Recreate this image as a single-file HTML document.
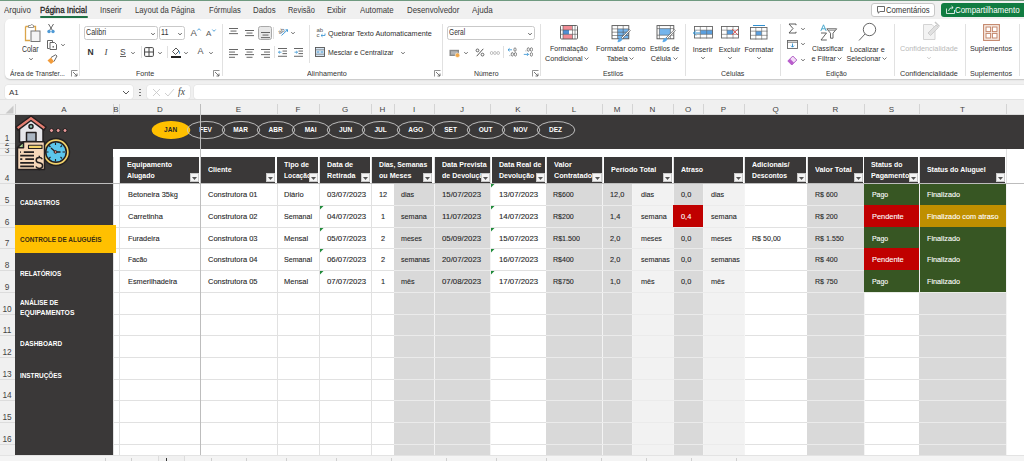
<!DOCTYPE html><html><head><meta charset="utf-8"><style>
*{margin:0;padding:0;box-sizing:border-box}
html,body{width:1024px;height:461px;overflow:hidden;background:#f0f0f0}
body{position:relative;font-family:"Liberation Sans",sans-serif;color:#262626}
.t{position:absolute;white-space:nowrap;line-height:1}
.rb{font-size:7.2px;color:#2e2e2e}
.tab{font-size:8px;color:#383838;letter-spacing:-0.05px}
.gl{font-size:7.2px;color:#333}
.cell{font-size:7.7px;color:#262626;letter-spacing:-0.05px}
.hd{font-size:7px;color:#fff;font-weight:bold}
.sb{font-size:6.5px;color:#fff;font-weight:bold}
.mo{font-size:6.5px;color:#fff;font-weight:bold}
.ch{font-size:8px;color:#444}
svg{position:absolute;overflow:visible}
svg.ic{position:relative;display:inline-block;vertical-align:baseline;margin-left:1.5px;top:-0.5px}
</style></head><body>
<div style="position:absolute;left:0px;top:0px;width:1024px;height:1px;background:#6f9a80"></div>
<div class="t" style="left:4.4px;top:6.3px;font-size:8.4px;color:#3a3a3a;transform:scaleX(0.944);transform-origin:0 0;">Arquivo</div>
<div class="t" style="left:40.3px;top:6.3px;font-size:8.4px;color:#1f1f1f;transform:scaleX(0.943);transform-origin:0 0;-webkit-text-stroke:0.3px #1f1f1f;">Página Inicial</div>
<div class="t" style="left:99.6px;top:6.3px;font-size:8.4px;color:#3a3a3a;transform:scaleX(0.930);transform-origin:0 0;">Inserir</div>
<div class="t" style="left:134.8px;top:6.3px;font-size:8.4px;color:#3a3a3a;transform:scaleX(0.918);transform-origin:0 0;">Layout da Página</div>
<div class="t" style="left:208.7px;top:6.3px;font-size:8.4px;color:#3a3a3a;transform:scaleX(0.908);transform-origin:0 0;">Fórmulas</div>
<div class="t" style="left:253.4px;top:6.3px;font-size:8.4px;color:#3a3a3a;transform:scaleX(0.935);transform-origin:0 0;">Dados</div>
<div class="t" style="left:287.6px;top:6.3px;font-size:8.4px;color:#3a3a3a;transform:scaleX(0.886);transform-origin:0 0;">Revisão</div>
<div class="t" style="left:327.2px;top:6.3px;font-size:8.4px;color:#3a3a3a;transform:scaleX(0.905);transform-origin:0 0;">Exibir</div>
<div class="t" style="left:359.6px;top:6.3px;font-size:8.4px;color:#3a3a3a;transform:scaleX(0.937);transform-origin:0 0;">Automate</div>
<div class="t" style="left:407.2px;top:6.3px;font-size:8.4px;color:#3a3a3a;transform:scaleX(0.937);transform-origin:0 0;">Desenvolvedor</div>
<div class="t" style="left:472.3px;top:6.3px;font-size:8.4px;color:#3a3a3a;transform:scaleX(0.963);transform-origin:0 0;">Ajuda</div>
<div style="position:absolute;left:40px;top:16px;width:48px;height:2px;background:#1e7145;border-radius:1px"></div>
<div style="position:absolute;left:871px;top:2.5px;width:64px;height:14px;background:#fff;border:1px solid #c8c8c8;border-radius:3px"></div>
<div class="t" style="left:885.7px;top:5.8px;font-size:8.6px;color:#333;transform:scaleX(0.896);transform-origin:0 0;">Comentários</div>
<svg style="left:876.5px;top:5.5px" width="8" height="8" viewBox="0 0 8 8"><path d="M0.5 0.5H7.5V5.5H3L1.2 7.2V5.5H0.5Z" fill="none" stroke="#444" stroke-width="0.8"/></svg>
<div style="position:absolute;left:941px;top:2.5px;width:90px;height:14px;background:#107c41;border-radius:3px"></div>
<div class="t" style="left:955.1px;top:5.8px;font-size:8.6px;color:#fff;transform:scaleX(0.919);transform-origin:0 0;">Compartilhamento</div>
<svg style="left:946px;top:5px" width="9" height="9" viewBox="0 0 9 9"><path d="M0.5 3.5V8.5H8.5V5" fill="none" stroke="#fff" stroke-width="0.8"/><path d="M2.5 6Q3 2.5 7 2.5M5.5 1L7.2 2.5L5.5 4" fill="none" stroke="#fff" stroke-width="0.8"/></svg>
<div style="position:absolute;left:4.5px;top:19px;width:1030px;height:60px;background:#fff;border-radius:5px;box-shadow:0 1px 1.5px rgba(0,0,0,0.18)"></div>
<div style="position:absolute;left:79px;top:24px;width:1px;height:52px;background:#e1e1e1"></div>
<div style="position:absolute;left:221.5px;top:24px;width:1px;height:52px;background:#e1e1e1"></div>
<div style="position:absolute;left:441.8px;top:24px;width:1px;height:52px;background:#e1e1e1"></div>
<div style="position:absolute;left:539.6px;top:24px;width:1px;height:52px;background:#e1e1e1"></div>
<div style="position:absolute;left:685px;top:24px;width:1px;height:52px;background:#e1e1e1"></div>
<div style="position:absolute;left:779.6px;top:24px;width:1px;height:52px;background:#e1e1e1"></div>
<div style="position:absolute;left:893.5px;top:24px;width:1px;height:52px;background:#e1e1e1"></div>
<div style="position:absolute;left:964.5px;top:24px;width:1px;height:52px;background:#e1e1e1"></div>
<div style="position:absolute;left:1019px;top:24px;width:1px;height:52px;background:#e1e1e1"></div>
<div style="position:absolute;left:309.3px;top:25px;width:0.8px;height:38px;background:#e1e1e1"></div>
<div class="t" style="left:10.2px;top:69.8px;font-size:7.6px;color:#333;transform:scaleX(0.880);transform-origin:0 0;">Área de Transfer...</div>
<div class="t" style="left:136.4px;top:69.8px;font-size:7.6px;color:#333;transform:scaleX(0.942);transform-origin:0 0;">Fonte</div>
<div class="t" style="left:307px;top:69.8px;font-size:7.6px;color:#333;transform:scaleX(0.944);transform-origin:0 0;">Alinhamento</div>
<div class="t" style="left:473.7px;top:69.8px;font-size:7.6px;color:#333;transform:scaleX(0.910);transform-origin:0 0;">Número</div>
<div class="t" style="left:602.6px;top:69.8px;font-size:7.6px;color:#333;transform:scaleX(0.907);transform-origin:0 0;">Estilos</div>
<div class="t" style="left:721px;top:69.8px;font-size:7.6px;color:#333;transform:scaleX(0.923);transform-origin:0 0;">Células</div>
<div class="t" style="left:826px;top:69.8px;font-size:7.6px;color:#333;transform:scaleX(0.891);transform-origin:0 0;">Edição</div>
<div class="t" style="left:900px;top:69.8px;font-size:7.6px;color:#333;transform:scaleX(0.957);transform-origin:0 0;">Confidencialidade</div>
<div class="t" style="left:970px;top:69.8px;font-size:7.6px;color:#333;transform:scaleX(0.947);transform-origin:0 0;">Suplementos</div>
<svg style="left:71px;top:70px" width="7" height="7" viewBox="0 0 7 7"><path d="M0.5 6.5V0.5H6.5" fill="none" stroke="#777" stroke-width="0.8"/><path d="M2 2L6 6M6 3.5V6H3.5" fill="none" stroke="#555" stroke-width="0.8"/></svg>
<svg style="left:212.6px;top:70px" width="7" height="7" viewBox="0 0 7 7"><path d="M0.5 6.5V0.5H6.5" fill="none" stroke="#777" stroke-width="0.8"/><path d="M2 2L6 6M6 3.5V6H3.5" fill="none" stroke="#555" stroke-width="0.8"/></svg>
<svg style="left:434.4px;top:70px" width="7" height="7" viewBox="0 0 7 7"><path d="M0.5 6.5V0.5H6.5" fill="none" stroke="#777" stroke-width="0.8"/><path d="M2 2L6 6M6 3.5V6H3.5" fill="none" stroke="#555" stroke-width="0.8"/></svg>
<svg style="left:532px;top:70px" width="7" height="7" viewBox="0 0 7 7"><path d="M0.5 6.5V0.5H6.5" fill="none" stroke="#777" stroke-width="0.8"/><path d="M2 2L6 6M6 3.5V6H3.5" fill="none" stroke="#555" stroke-width="0.8"/></svg>
<svg style="left:22px;top:23px" width="20" height="20" viewBox="0 0 20 20"><path d="M3.5 3.5H7M11 3.5H13.5V8M3.5 3.5V17.5H8" fill="none" stroke="#dba54a" stroke-width="1.3"/><path d="M6.5 4.5V2.5H8.5A1.3 1.3 0 0 1 11 2.5H11.5V4.5Z" fill="#fff" stroke="#888" stroke-width="0.9"/><rect x="9" y="8" width="9" height="10.5" fill="#f4f4f4" stroke="#777" stroke-width="1"/></svg>
<div class="t" style="left:22px;top:46.3px;font-size:8.2px;color:#333;transform:scaleX(0.847);transform-origin:0 0;">Colar</div>
<svg style="left:27.5px;top:56.5px" width="6" height="4" viewBox="0 0 6 4"><path d="M1.3 1.15L3 2.85L4.7 1.15" fill="none" stroke="#555" stroke-width="0.9"/></svg>
<svg style="left:46px;top:23px" width="10" height="11" viewBox="0 0 10 11"><path d="M2.5 1L6.5 7.5M7.5 1L3.5 7.5" stroke="#555" stroke-width="0.9"/><circle cx="3" cy="8.5" r="1.7" fill="#4f9ad6"/><circle cx="7" cy="8.5" r="1.7" fill="#4f9ad6"/></svg>
<svg style="left:45.5px;top:39px" width="12" height="11" viewBox="0 0 12 11"><path d="M3.5 9.5H1.5V1.5H6.5V3" fill="none" stroke="#555" stroke-width="0.9"/><path d="M4 3.5H8.5L10.5 5.5V10.5H4Z" fill="#fff" stroke="#555" stroke-width="0.9"/><rect x="6.5" y="7" width="1.5" height="1.6" fill="#777"/></svg>
<svg style="left:59.5px;top:42.5px" width="6" height="4" viewBox="0 0 6 4"><path d="M1.3 1.15L3 2.85L4.7 1.15" fill="none" stroke="#555" stroke-width="0.9"/></svg>
<svg style="left:45.5px;top:54px" width="12" height="11" viewBox="0 0 12 11"><path d="M1.5 6.5L5 3.5L8 7.5L5 10Z" fill="#f29b3a"/><path d="M5 3.5L9.5 0.8L11 2L8 7.5" fill="none" stroke="#555" stroke-width="0.9"/></svg>
<div style="position:absolute;left:84px;top:26px;width:74px;height:14px;border:1px solid #c9c9c9;border-radius:2.5px;background:#fff"></div>
<div class="t" style="left:86px;top:29.3px;font-size:8.2px;color:#333;transform:scaleX(0.869);transform-origin:0 0;">Calibri</div>
<svg style="left:150px;top:31.5px" width="6" height="4" viewBox="0 0 6 4"><path d="M1.3 1.15L3 2.85L4.7 1.15" fill="none" stroke="#444" stroke-width="0.9"/></svg>
<div style="position:absolute;left:159.3px;top:26px;width:25.5px;height:14px;border:1px solid #c9c9c9;border-radius:2.5px;background:#fff"></div>
<div class="t" style="left:161.1px;top:29.3px;font-size:8.2px;color:#333;transform:scaleX(0.869);transform-origin:0 0;">11</div>
<svg style="left:177px;top:31.5px" width="6" height="4" viewBox="0 0 6 4"><path d="M1.3 1.15L3 2.85L4.7 1.15" fill="none" stroke="#444" stroke-width="0.9"/></svg>
<div class="t" style="left:190.5px;top:28px;font-size:9.5px;color:#555">A</div>
<svg style="left:196.5px;top:28px" width="4" height="3" viewBox="0 0 4 3"><path d="M0.3 2.5L2 0.7L3.7 2.5" fill="none" stroke="#2f8fd0" stroke-width="0.8"/></svg>
<div class="t" style="left:206px;top:29.5px;font-size:8px;color:#555">A</div>
<svg style="left:211.5px;top:28.5px" width="4" height="3" viewBox="0 0 4 3"><path d="M0.3 0.5L2 2.3L3.7 0.5" fill="none" stroke="#2f8fd0" stroke-width="0.8"/></svg>
<div class="t" style="left:87.5px;top:48px;font-size:8.5px;color:#333;font-weight:bold">N</div>
<div class="t" style="left:104.5px;top:47.5px;font-size:9px;color:#444;font-family:'Liberation Serif',serif;font-style:italic">I</div>
<div class="t" style="left:120px;top:47.5px;font-size:8.5px;color:#444">S</div>
<div style="position:absolute;left:120px;top:56px;width:6px;height:0.8px;background:#666"></div>
<svg style="left:130px;top:50.5px" width="6" height="4" viewBox="0 0 6 4"><path d="M1.3 1.15L3 2.85L4.7 1.15" fill="none" stroke="#555" stroke-width="0.9"/></svg>
<div style="position:absolute;left:140.7px;top:46px;width:0.8px;height:12px;background:#e0e0e0"></div>
<svg style="left:144px;top:47px" width="10" height="10" viewBox="0 0 10 10"><rect x="0.6" y="0.6" width="8.8" height="8.8" rx="1" fill="none" stroke="#444" stroke-width="1"/><path d="M5 0.6V9.4M0.6 5H9.4" stroke="#444" stroke-width="1"/></svg>
<svg style="left:157.3px;top:50.5px" width="6" height="4" viewBox="0 0 6 4"><path d="M1.3 1.15L3 2.85L4.7 1.15" fill="none" stroke="#555" stroke-width="0.9"/></svg>
<div style="position:absolute;left:166.6px;top:46px;width:0.8px;height:12px;background:#e0e0e0"></div>
<svg style="left:170px;top:45.5px" width="11" height="11" viewBox="0 0 11 11"><path d="M2.5 5.5L6 2L9 5L5.5 8.5Z" fill="none" stroke="#444" stroke-width="0.9"/><path d="M9 5.2Q10 7 9.5 7.6" stroke="#2f8fd0" stroke-width="1"/></svg>
<div style="position:absolute;left:170.5px;top:55.5px;width:10px;height:2px;background:#222"></div>
<svg style="left:183.3px;top:50.5px" width="6" height="4" viewBox="0 0 6 4"><path d="M1.3 1.15L3 2.85L4.7 1.15" fill="none" stroke="#555" stroke-width="0.9"/></svg>
<div class="t" style="left:197.5px;top:47px;font-size:9px;color:#555">A</div>
<svg style="left:208px;top:50.5px" width="6" height="4" viewBox="0 0 6 4"><path d="M1.3 1.15L3 2.85L4.7 1.15" fill="none" stroke="#555" stroke-width="0.9"/></svg>
<svg style="left:229px;top:28px" width="10" height="10" viewBox="0 0 10 10"><rect x="0" y="0.0" width="9" height="0.9" fill="#555"/><rect x="1.5" y="2.6" width="6" height="0.9" fill="#555"/><rect x="0" y="5.2" width="9" height="0.9" fill="#555"/></svg>
<svg style="left:244.5px;top:29.5px" width="10" height="10" viewBox="0 0 10 10"><rect x="0" y="0.0" width="9" height="0.9" fill="#555"/><rect x="1.5" y="2.6" width="6" height="0.9" fill="#555"/><rect x="0" y="5.2" width="9" height="0.9" fill="#555"/></svg>
<div style="position:absolute;left:258px;top:26px;width:13.5px;height:14px;background:#e8e8e8;border:1px solid #a9a9a9;border-radius:2.5px"></div>
<svg style="left:260.5px;top:31.5px" width="10" height="10" viewBox="0 0 10 10"><rect x="0" y="0.0" width="9" height="0.9" fill="#555"/><rect x="1.5" y="2.6" width="6" height="0.9" fill="#555"/><rect x="0" y="5.2" width="9" height="0.9" fill="#555"/></svg>
<div style="position:absolute;left:273.4px;top:27px;width:0.8px;height:12px;background:#e0e0e0"></div>
<div class="t" style="left:278px;top:28px;font-size:6px;color:#555;transform:rotate(-30deg)">ab</div>
<svg style="left:281px;top:29px" width="8" height="7" viewBox="0 0 8 7"><path d="M0.5 6.5L6.5 0.8M4.5 0.8H6.5V2.8" fill="none" stroke="#2f8fd0" stroke-width="0.9"/></svg>
<svg style="left:289.5px;top:31px" width="6" height="4" viewBox="0 0 6 4"><path d="M1.3 1.15L3 2.85L4.7 1.15" fill="none" stroke="#555" stroke-width="0.9"/></svg>
<svg style="left:229px;top:48.5px" width="10" height="10" viewBox="0 0 10 10"><rect x="0" y="0.0" width="9" height="0.9" fill="#555"/><rect x="0" y="2.6" width="6" height="0.9" fill="#555"/><rect x="0" y="5.2" width="9" height="0.9" fill="#555"/><rect x="0" y="7.800000000000001" width="6" height="0.9" fill="#555"/></svg>
<svg style="left:244.5px;top:48.5px" width="10" height="10" viewBox="0 0 10 10"><rect x="0" y="0.0" width="9" height="0.9" fill="#555"/><rect x="1.5" y="2.6" width="6" height="0.9" fill="#555"/><rect x="0" y="5.2" width="9" height="0.9" fill="#555"/><rect x="1.5" y="7.800000000000001" width="6" height="0.9" fill="#555"/></svg>
<svg style="left:260.5px;top:48.5px" width="10" height="10" viewBox="0 0 10 10"><rect x="0" y="0.0" width="9" height="0.9" fill="#555"/><rect x="3" y="2.6" width="6" height="0.9" fill="#555"/><rect x="0" y="5.2" width="9" height="0.9" fill="#555"/><rect x="3" y="7.800000000000001" width="6" height="0.9" fill="#555"/></svg>
<div style="position:absolute;left:273.6px;top:46px;width:0.8px;height:12px;background:#e0e0e0"></div>
<svg style="left:277.5px;top:48px" width="10" height="9" viewBox="0 0 10 9"><rect x="0" y="0" width="9" height="0.9" fill="#555"/><rect x="4.5" y="2.6" width="4.5" height="0.9" fill="#555"/><rect x="4.5" y="5.2" width="4.5" height="0.9" fill="#555"/><rect x="0" y="7.8" width="9" height="0.9" fill="#555"/><path d="M3.5 4.2H0.5M1.8 3L0.5 4.2L1.8 5.4" fill="none" stroke="#2f8fd0" stroke-width="0.8"/></svg>
<svg style="left:293.5px;top:48px" width="10" height="9" viewBox="0 0 10 9"><rect x="0" y="0" width="9" height="0.9" fill="#555"/><rect x="4.5" y="2.6" width="4.5" height="0.9" fill="#555"/><rect x="4.5" y="5.2" width="4.5" height="0.9" fill="#555"/><rect x="0" y="7.8" width="9" height="0.9" fill="#555"/><path d="M0.5 4.2H3.5M2.2 3L3.5 4.2L2.2 5.4" fill="none" stroke="#2f8fd0" stroke-width="0.8"/></svg>
<div class="t" style="left:316.5px;top:27px;font-size:6px;color:#555">ab</div>
<div class="t" style="left:316.5px;top:32px;font-size:6px;color:#555">c</div>
<svg style="left:319.5px;top:33px" width="6" height="5" viewBox="0 0 6 5"><path d="M5 0.5V2.5H1.2M2.5 1.2L1 2.5L2.5 3.8" fill="none" stroke="#2f8fd0" stroke-width="0.8"/></svg>
<div class="t" style="left:327.9px;top:30.2px;font-size:7.6px;color:#2e2e2e;transform:scaleX(0.954);transform-origin:0 0;">Quebrar Texto Automaticamente</div>
<svg style="left:315px;top:47px" width="10" height="10" viewBox="0 0 10 10"><rect x="0.5" y="0.5" width="9" height="9" fill="#d6e6f4" stroke="#555" stroke-width="0.9"/><path d="M0.5 2.8H9.5M0.5 7.2H9.5" stroke="#555" stroke-width="0.6"/><path d="M1.8 5H4.2M8.2 5H5.8" stroke="#2f8fd0" stroke-width="0.9"/></svg>
<div class="t" style="left:327.9px;top:49px;font-size:7.6px;color:#2e2e2e;transform:scaleX(0.914);transform-origin:0 0;">Mesclar e Centralizar</div>
<svg style="left:399.5px;top:50.5px" width="6" height="4" viewBox="0 0 6 4"><path d="M1.3 1.15L3 2.85L4.7 1.15" fill="none" stroke="#555" stroke-width="0.9"/></svg>
<div style="position:absolute;left:447px;top:26px;width:87.5px;height:14px;border:1px solid #c9c9c9;border-radius:2.5px;background:#fff"></div>
<div class="t" style="left:449px;top:29.3px;font-size:8.2px;color:#333;transform:scaleX(0.808);transform-origin:0 0;">Geral</div>
<svg style="left:527px;top:31.5px" width="6" height="4" viewBox="0 0 6 4"><path d="M1.3 1.15L3 2.85L4.7 1.15" fill="none" stroke="#444" stroke-width="0.9"/></svg>
<svg style="left:449px;top:48.5px" width="12" height="9" viewBox="0 0 12 9"><rect x="0.5" y="0.8" width="9.5" height="6.2" fill="#8a8a8a"/><rect x="2" y="2.2" width="6.5" height="3.4" fill="#b5b5b5"/><circle cx="8.5" cy="6.2" r="2.3" fill="#f2a94a" stroke="#fff" stroke-width="0.5"/></svg>
<svg style="left:462.6px;top:50.5px" width="6" height="4" viewBox="0 0 6 4"><path d="M1.3 1.15L3 2.85L4.7 1.15" fill="none" stroke="#555" stroke-width="0.9"/></svg>
<svg style="left:474.5px;top:48px" width="10" height="9" viewBox="0 0 10 9"><path d="M8.3 0.8L1.7 8.2" stroke="#555" stroke-width="1"/><circle cx="2.5" cy="2.4" r="1.4" fill="none" stroke="#555" stroke-width="0.9"/><circle cx="7.5" cy="6.6" r="1.4" fill="none" stroke="#555" stroke-width="0.9"/></svg>
<svg style="left:489.5px;top:50.5px" width="10" height="4" viewBox="0 0 10 4"><ellipse cx="1.6" cy="2" rx="1.3" ry="1.5" fill="none" stroke="#999" stroke-width="0.6"/><ellipse cx="4.9" cy="2" rx="1.3" ry="1.5" fill="none" stroke="#999" stroke-width="0.6"/><ellipse cx="8.2" cy="2" rx="1.3" ry="1.5" fill="none" stroke="#999" stroke-width="0.6"/></svg>
<div style="position:absolute;left:503.3px;top:46px;width:0.8px;height:12px;background:#e0e0e0"></div>
<svg style="left:507px;top:47px" width="11" height="10" viewBox="0 0 11 10"><path d="M5 2.8H1M2.6 1.3L1 2.8L2.6 4.3" fill="none" stroke="#2f8fd0" stroke-width="0.8"/><ellipse cx="8" cy="2.6" rx="1.1" ry="1.8" fill="none" stroke="#666" stroke-width="0.8"/><rect x="2.5" y="8.3" width="0.8" height="0.8" fill="#777"/><ellipse cx="5.3" cy="7.3" rx="1.1" ry="1.8" fill="none" stroke="#666" stroke-width="0.8"/><ellipse cx="8.4" cy="7.3" rx="1.1" ry="1.8" fill="none" stroke="#666" stroke-width="0.8"/></svg>
<svg style="left:522.5px;top:47px" width="11" height="10" viewBox="0 0 11 10"><rect x="2.5" y="3.5" width="0.8" height="0.8" fill="#777"/><ellipse cx="5.3" cy="2.5" rx="1.1" ry="1.8" fill="none" stroke="#666" stroke-width="0.8"/><ellipse cx="8.4" cy="2.5" rx="1.1" ry="1.8" fill="none" stroke="#666" stroke-width="0.8"/><path d="M0.8 7.4H5.5M4 5.9L5.5 7.4L4 8.9" fill="none" stroke="#2f8fd0" stroke-width="0.8"/><ellipse cx="8.4" cy="7.4" rx="1.1" ry="1.8" fill="none" stroke="#666" stroke-width="0.8"/></svg>
<svg style="left:560px;top:25px" width="18" height="14.5" viewBox="0 0 18 14.5"><rect x="0.5" y="0.5" width="17" height="13.5" fill="#fff"/><rect x="3" y="0.5" width="9" height="4.5" fill="#f28c95"/><rect x="3" y="9.3" width="9.5" height="4.7" fill="#f28c95"/><rect x="3" y="5" width="6" height="4.3" fill="#4f8fd6"/><rect x="0.5" y="0.5" width="17" height="13.5" rx="1" fill="none" stroke="#555" stroke-width="0.9"/><path d="M3 0.5V14M12.5 0.5V14M15 0.5V14M0.5 5H17.5M0.5 9.3H17.5" stroke="#555" stroke-width="0.6"/></svg>
<div class="t" style="left:550px;top:45.3px;font-size:7.6px;color:#2e2e2e;transform:scaleX(0.927);transform-origin:0 0;">Formatação</div>
<div class="t rb" style="left:467px;top:54.5px;width:200px;text-align:center;">Condicional<svg class="ic" width="5" height="3" viewBox="0 0 5 3"><path d="M0.5 0.5L2.5 2.5L4.5 0.5" fill="none" stroke="#555" stroke-width="0.8"/></svg></div>
<svg style="left:611px;top:24px" width="22" height="19" viewBox="0 0 22 19"><rect x="1" y="1.6" width="16.8" height="13.2" fill="#fff"/><rect x="6.6" y="4.9" width="11.2" height="9.9" fill="#74b4ec"/><rect x="1" y="1.6" width="16.8" height="13.2" fill="none" stroke="#555" stroke-width="0.9"/><path d="M6.6 1.6V14.8M12.2 1.6V14.8M1 4.9H17.8M1 8.2H17.8M1 11.5H17.8" stroke="#555" stroke-width="0.6"/><path d="M18.3 5.5L19.3 6.5L11.2 15L10 14Z" fill="#fff" stroke="#555" stroke-width="0.7"/><path d="M10 14Q7.2 14.2 6.8 18Q10.5 17.6 11.2 15Z" fill="#5ba9e8" stroke="#5ba9e8" stroke-width="0.5"/></svg>
<div class="t" style="left:595.6px;top:45.3px;font-size:7.6px;color:#2e2e2e;transform:scaleX(0.961);transform-origin:0 0;">Formatar como</div>
<div class="t rb" style="left:520.5px;top:54.5px;width:200px;text-align:center;">Tabela<svg class="ic" width="5" height="3" viewBox="0 0 5 3"><path d="M0.5 0.5L2.5 2.5L4.5 0.5" fill="none" stroke="#555" stroke-width="0.8"/></svg></div>
<svg style="left:655.5px;top:24px" width="22" height="19" viewBox="0 0 22 19"><rect x="1" y="1.6" width="16.8" height="13.2" fill="#fff"/><rect x="3.4" y="4.6" width="11" height="6.6" fill="#74b4ec"/><rect x="1" y="1.6" width="16.8" height="13.2" fill="none" stroke="#555" stroke-width="0.9"/><path d="M1 4.6H17.8M1 11.2H17.8M3.4 1.6V14.8M14.4 1.6V14.8" stroke="#555" stroke-width="0.6"/><path d="M18.3 5.5L19.3 6.5L11.2 15L10 14Z" fill="#fff" stroke="#555" stroke-width="0.7"/><path d="M10 14Q7.2 14.2 6.8 18Q10.5 17.6 11.2 15Z" fill="#5ba9e8" stroke="#5ba9e8" stroke-width="0.5"/></svg>
<div class="t" style="left:649.5px;top:45.3px;font-size:7.6px;color:#2e2e2e;transform:scaleX(0.889);transform-origin:0 0;">Estilos de</div>
<div class="t rb" style="left:564.2px;top:54.5px;width:200px;text-align:center;">Célula<svg class="ic" width="5" height="3" viewBox="0 0 5 3"><path d="M0.5 0.5L2.5 2.5L4.5 0.5" fill="none" stroke="#555" stroke-width="0.8"/></svg></div>
<svg style="left:693.5px;top:26px" width="19" height="12.5" viewBox="0 0 19 12.5"><rect x="6.333333333333333" y="4.166666666666667" width="12.666666666666666" height="4.166666666666667" fill="#5ba0e0"/><rect x="0.5" y="0.5" width="18" height="11.5" fill="none" stroke="#666" stroke-width="0.9"/><path d="M6.333333333333333 0V12.5" stroke="#666" stroke-width="0.6"/><path d="M12.666666666666666 0V12.5" stroke="#666" stroke-width="0.6"/><path d="M0 4.166666666666667H19" stroke="#666" stroke-width="0.6"/><path d="M0 8.333333333333334H19" stroke="#666" stroke-width="0.6"/></svg>
<svg style="left:691.5px;top:28.5px" width="9" height="8" viewBox="0 0 9 8"><path d="M8 4H1.5M4 1.5L1.5 4L4 6.5" fill="none" stroke="#2f8fd0" stroke-width="1"/></svg>
<div class="t rb" style="left:602.7px;top:45.5px;width:200px;text-align:center;">Inserir</div>
<svg style="left:699.7px;top:56px" width="6" height="4" viewBox="0 0 6 4"><path d="M1.3 1.15L3 2.85L4.7 1.15" fill="none" stroke="#555" stroke-width="0.9"/></svg>
<svg style="left:721px;top:26px" width="18" height="12.5" viewBox="0 0 18 12.5"><rect x="6.0" y="4.166666666666667" width="6.0" height="4.166666666666667" fill="#5ba0e0"/><rect x="0.5" y="0.5" width="17" height="11.5" fill="none" stroke="#666" stroke-width="0.9"/><path d="M6.0 0V12.5" stroke="#666" stroke-width="0.6"/><path d="M12.0 0V12.5" stroke="#666" stroke-width="0.6"/><path d="M0 4.166666666666667H18" stroke="#666" stroke-width="0.6"/><path d="M0 8.333333333333334H18" stroke="#666" stroke-width="0.6"/></svg>
<svg style="left:731px;top:27.5px" width="8" height="8" viewBox="0 0 8 8"><path d="M1 1L7 7M7 1L1 7" stroke="#e05555" stroke-width="0.9"/></svg>
<div class="t rb" style="left:629.5px;top:45.5px;width:200px;text-align:center;">Excluir</div>
<svg style="left:726.5px;top:56px" width="6" height="4" viewBox="0 0 6 4"><path d="M1.3 1.15L3 2.85L4.7 1.15" fill="none" stroke="#555" stroke-width="0.9"/></svg>
<svg style="left:750px;top:27px" width="17.5" height="12.5" viewBox="0 0 17.5 12.5"><rect x="5.833333333333333" y="4.166666666666667" width="5.833333333333333" height="4.166666666666667" fill="#5ba0e0"/><rect x="0.5" y="0.5" width="16.5" height="11.5" fill="none" stroke="#666" stroke-width="0.9"/><path d="M5.833333333333333 0V12.5" stroke="#666" stroke-width="0.6"/><path d="M11.666666666666666 0V12.5" stroke="#666" stroke-width="0.6"/><path d="M0 4.166666666666667H17.5" stroke="#666" stroke-width="0.6"/><path d="M0 8.333333333333334H17.5" stroke="#666" stroke-width="0.6"/></svg>
<div style="position:absolute;left:752.5px;top:24.5px;width:12px;height:0.8px;background:#2f8fd0"></div>
<div class="t rb" style="left:659px;top:45.5px;width:200px;text-align:center;">Formatar</div>
<svg style="left:756px;top:56px" width="6" height="4" viewBox="0 0 6 4"><path d="M1.3 1.15L3 2.85L4.7 1.15" fill="none" stroke="#555" stroke-width="0.9"/></svg>
<svg style="left:788px;top:23px" width="9" height="11" viewBox="0 0 9 11"><path d="M8 2.2V1H1L5 5.5L1 10H8V8.8" fill="none" stroke="#4a4a4a" stroke-width="0.9"/></svg>
<svg style="left:800.4px;top:26.5px" width="6" height="4" viewBox="0 0 6 4"><path d="M1.3 1.15L3 2.85L4.7 1.15" fill="none" stroke="#555" stroke-width="0.9"/></svg>
<svg style="left:787px;top:39.5px" width="11" height="9" viewBox="0 0 11 9"><rect x="0.5" y="0.5" width="10" height="8" fill="#fff" stroke="#666" stroke-width="0.9"/><path d="M0.5 2.2H10.5" stroke="#666" stroke-width="0.9"/><path d="M5.5 3.5V7M4 5.7L5.5 7.2L7 5.7" fill="none" stroke="#2f8fd0" stroke-width="0.9"/></svg>
<svg style="left:799.5px;top:42px" width="6" height="4" viewBox="0 0 6 4"><path d="M1.3 1.15L3 2.85L4.7 1.15" fill="none" stroke="#555" stroke-width="0.9"/></svg>
<svg style="left:787px;top:54.5px" width="11" height="10" viewBox="0 0 11 10"><path d="M0.8 6L5.8 1L9.8 5L4.8 10Z" fill="#f3dcf7" stroke="#a84fbf" stroke-width="0.9"/><path d="M0.8 6L3 3.8L7 7.8L4.8 10Z" fill="#b95ccc"/></svg>
<svg style="left:799.5px;top:57.5px" width="6" height="4" viewBox="0 0 6 4"><path d="M1.3 1.15L3 2.85L4.7 1.15" fill="none" stroke="#555" stroke-width="0.9"/></svg>
<svg style="left:819.5px;top:24px" width="8" height="17" viewBox="0 0 8 17"><path d="M0.8 7L3.5 0.8L6.2 7M1.8 4.8H5.2" fill="none" stroke="#3aa0c8" stroke-width="0.9"/><path d="M1 9H6.5L1 16H6.8" fill="none" stroke="#555" stroke-width="0.9"/></svg>
<svg style="left:826px;top:27.5px" width="11.5" height="11" viewBox="0 0 11.5 11"><path d="M0.8 0.8H10.7L7 5.2V10.2H4.5V5.2Z" fill="none" stroke="#555" stroke-width="0.9"/><path d="M2.5 2.3H9" stroke="#555" stroke-width="0.6"/></svg>
<div class="t" style="left:812px;top:45.3px;font-size:7.6px;color:#2e2e2e;transform:scaleX(0.904);transform-origin:0 0;">Classificar</div>
<div class="t rb" style="left:727px;top:54.5px;width:200px;text-align:center;">e Filtrar<svg class="ic" width="5" height="3" viewBox="0 0 5 3"><path d="M0.5 0.5L2.5 2.5L4.5 0.5" fill="none" stroke="#555" stroke-width="0.8"/></svg></div>
<svg style="left:857px;top:22px" width="20" height="20" viewBox="0 0 20 20"><circle cx="12.5" cy="7.5" r="6.2" fill="none" stroke="#555" stroke-width="0.9"/><path d="M8 12L2 18.5" stroke="#555" stroke-width="0.9"/></svg>
<div class="t rb" style="left:767.4px;top:45.5px;width:200px;text-align:center;">Localizar e</div>
<div class="t rb" style="left:766.8px;top:54.5px;width:200px;text-align:center;">Selecionar<svg class="ic" width="5" height="3" viewBox="0 0 5 3"><path d="M0.5 0.5L2.5 2.5L4.5 0.5" fill="none" stroke="#555" stroke-width="0.8"/></svg></div>
<svg style="left:921px;top:20px" width="20" height="21" viewBox="0 0 20 21"><path d="M2.5 4.5H11L14 7.5V19.5H2.5Z" fill="#f3f3f3" stroke="#cfcfcf" stroke-width="0.9"/><path d="M7 13L15 5L17.5 7.5L9.5 15.5Z" fill="#e0e0e0" stroke="#c9c9c9" stroke-width="0.9"/><path d="M14 2L18.5 6.5" stroke="#c9c9c9" stroke-width="1.5"/></svg>
<div class="t" style="left:900px;top:45.3px;font-size:7.6px;color:#b9b9b9;transform:scaleX(0.957);transform-origin:0 0;">Confidencialidade</div>
<svg style="left:926px;top:56px" width="6" height="4" viewBox="0 0 6 4"><path d="M1.3 1.15L3 2.85L4.7 1.15" fill="none" stroke="#c4c4c4" stroke-width="0.9"/></svg>
<svg style="left:983px;top:24px" width="17" height="17" viewBox="0 0 17 17"><rect x="0.6" y="0.6" width="15.8" height="15.8" fill="#fbf1ea" stroke="#c4866a" stroke-width="1.1"/><rect x="3" y="3" width="4.6" height="4.6" fill="#fff" stroke="#c4866a" stroke-width="1"/><rect x="9.4" y="3" width="4.6" height="4.6" fill="#fff" stroke="#c4866a" stroke-width="1"/><rect x="3" y="9.4" width="4.6" height="4.6" fill="#fff" stroke="#c4866a" stroke-width="1"/><rect x="9.4" y="9.4" width="4.6" height="4.6" fill="#fff" stroke="#c4866a" stroke-width="1"/></svg>
<div class="t" style="left:970px;top:45.3px;font-size:7.6px;color:#2e2e2e;transform:scaleX(0.947);transform-origin:0 0;">Suplementos</div>
<div style="position:absolute;left:5px;top:85px;width:128px;height:14px;background:#fff;border-radius:3px;box-shadow:0 0 0 0.5px #e0e0e0"></div>
<div class="t" style="left:9px;top:88.5px;font-size:8px;color:#333">A1</div>
<svg style="left:122px;top:89.5px" width="8" height="5" viewBox="0 0 8 5"><path d="M1 1L4 4L7 1" fill="none" stroke="#444" stroke-width="0.9"/></svg>
<div style="position:absolute;left:139.3px;top:88.5px;width:1.4px;height:1.4px;background:#666;border-radius:1px"></div>
<div style="position:absolute;left:139.3px;top:91.5px;width:1.4px;height:1.4px;background:#666;border-radius:1px"></div>
<div style="position:absolute;left:139.3px;top:94.5px;width:1.4px;height:1.4px;background:#666;border-radius:1px"></div>
<div style="position:absolute;left:147px;top:85px;width:43px;height:14px;background:#fff;border-radius:3px;box-shadow:0 0 0 0.5px #e0e0e0"></div>
<svg style="left:152px;top:88px" width="30" height="9" viewBox="0 0 30 9"><path d="M1 1L8 8M8 1L1 8" stroke="#c4c4c4" stroke-width="0.8"/><path d="M13 5L16 8L22 1" fill="none" stroke="#c4c4c4" stroke-width="0.8"/></svg>
<div class="t" style="left:178px;top:87.5px;font-family:'Liberation Serif',serif;font-size:9.5px;color:#444"><i>fx</i></div>
<div style="position:absolute;left:194px;top:85px;width:900px;height:14px;background:#fff;border-radius:3px;box-shadow:0 0 0 0.5px #e0e0e0"></div>
<div style="position:absolute;left:0px;top:99px;width:1024px;height:16px;background:#f0f0f0"></div>
<div style="position:absolute;left:0px;top:99px;width:1024px;height:1px;background:#e2e2e2"></div>
<svg style="left:4px;top:104px" width="10" height="10" viewBox="0 0 10 10"><path d="M9.5 1.5V9.5H1.5Z" fill="#c9c9c9"/></svg>
<div style="position:absolute;left:113px;top:104px;width:1px;height:11px;background:#d4d4d4"></div>
<div class="t ch" style="left:-36.0px;top:105.5px;width:200px;text-align:center;">A</div>
<div style="position:absolute;left:119px;top:104px;width:1px;height:11px;background:#d4d4d4"></div>
<div class="t ch" style="left:16.0px;top:105.5px;width:200px;text-align:center;">B</div>
<div style="position:absolute;left:200px;top:104px;width:1px;height:11px;background:#d4d4d4"></div>
<div class="t ch" style="left:60.0px;top:105.5px;width:200px;text-align:center;">D</div>
<div style="position:absolute;left:277px;top:104px;width:1px;height:11px;background:#d4d4d4"></div>
<div class="t ch" style="left:138.5px;top:105.5px;width:200px;text-align:center;">E</div>
<div style="position:absolute;left:319px;top:104px;width:1px;height:11px;background:#d4d4d4"></div>
<div class="t ch" style="left:198.0px;top:105.5px;width:200px;text-align:center;">F</div>
<div style="position:absolute;left:371px;top:104px;width:1px;height:11px;background:#d4d4d4"></div>
<div class="t ch" style="left:245.0px;top:105.5px;width:200px;text-align:center;">G</div>
<div style="position:absolute;left:394px;top:104px;width:1px;height:11px;background:#d4d4d4"></div>
<div class="t ch" style="left:282.5px;top:105.5px;width:200px;text-align:center;">H</div>
<div style="position:absolute;left:434px;top:104px;width:1px;height:11px;background:#d4d4d4"></div>
<div class="t ch" style="left:314.0px;top:105.5px;width:200px;text-align:center;">I</div>
<div style="position:absolute;left:490px;top:104px;width:1px;height:11px;background:#d4d4d4"></div>
<div class="t ch" style="left:362.0px;top:105.5px;width:200px;text-align:center;">J</div>
<div style="position:absolute;left:546px;top:104px;width:1px;height:11px;background:#d4d4d4"></div>
<div class="t ch" style="left:418.0px;top:105.5px;width:200px;text-align:center;">K</div>
<div style="position:absolute;left:602px;top:104px;width:1px;height:11px;background:#d4d4d4"></div>
<div class="t ch" style="left:474.0px;top:105.5px;width:200px;text-align:center;">L</div>
<div style="position:absolute;left:632px;top:104px;width:1px;height:11px;background:#d4d4d4"></div>
<div class="t ch" style="left:517.0px;top:105.5px;width:200px;text-align:center;">M</div>
<div style="position:absolute;left:673px;top:104px;width:1px;height:11px;background:#d4d4d4"></div>
<div class="t ch" style="left:552.5px;top:105.5px;width:200px;text-align:center;">N</div>
<div style="position:absolute;left:703px;top:104px;width:1px;height:11px;background:#d4d4d4"></div>
<div class="t ch" style="left:588.0px;top:105.5px;width:200px;text-align:center;">O</div>
<div style="position:absolute;left:744px;top:104px;width:1px;height:11px;background:#d4d4d4"></div>
<div class="t ch" style="left:623.5px;top:105.5px;width:200px;text-align:center;">P</div>
<div style="position:absolute;left:807px;top:104px;width:1px;height:11px;background:#d4d4d4"></div>
<div class="t ch" style="left:675.5px;top:105.5px;width:200px;text-align:center;">Q</div>
<div style="position:absolute;left:864px;top:104px;width:1px;height:11px;background:#d4d4d4"></div>
<div class="t ch" style="left:735.5px;top:105.5px;width:200px;text-align:center;">R</div>
<div style="position:absolute;left:919px;top:104px;width:1px;height:11px;background:#d4d4d4"></div>
<div class="t ch" style="left:791.5px;top:105.5px;width:200px;text-align:center;">S</div>
<div style="position:absolute;left:1006px;top:104px;width:1px;height:11px;background:#d4d4d4"></div>
<div class="t ch" style="left:862.5px;top:105.5px;width:200px;text-align:center;">T</div>
<div style="position:absolute;left:1090px;top:104px;width:1px;height:11px;background:#d4d4d4"></div>
<div class="t ch" style="left:948.0px;top:105.5px;width:200px;text-align:center;">U</div>
<div style="position:absolute;left:14.5px;top:104px;width:1px;height:11px;background:#d4d4d4"></div>
<div style="position:absolute;left:0px;top:114px;width:1024px;height:1px;background:#dadada"></div>
<div style="position:absolute;left:0px;top:115px;width:15px;height:340px;background:#f0f0f0"></div>
<div style="position:absolute;left:14.5px;top:115px;width:1px;height:340px;background:#d4d4d4"></div>
<div style="position:absolute;left:0px;top:143px;width:15px;height:1px;background:#dcdcdc"></div>
<div style="position:absolute;left:0;top:115px;width:15px;height:28px;overflow:hidden"><div class="t ch" style="left:0;width:14px;text-align:center;top:18.7px;font-size:8.3px">1</div></div>
<div style="position:absolute;left:0px;top:148px;width:15px;height:1px;background:#dcdcdc"></div>
<div style="position:absolute;left:0;top:143px;width:15px;height:5px;overflow:hidden"><div class="t ch" style="left:0;width:14px;text-align:center;top:-4.300000000000001px;font-size:8.3px">2</div></div>
<div style="position:absolute;left:0px;top:155px;width:15px;height:1px;background:#dcdcdc"></div>
<div style="position:absolute;left:0;top:148px;width:15px;height:7px;overflow:hidden"><div class="t ch" style="left:0;width:14px;text-align:center;top:-2.3000000000000007px;font-size:8.3px">3</div></div>
<div style="position:absolute;left:0px;top:183px;width:15px;height:1px;background:#dcdcdc"></div>
<div style="position:absolute;left:0;top:155px;width:15px;height:28px;overflow:hidden"><div class="t ch" style="left:0;width:14px;text-align:center;top:18.7px;font-size:8.3px">4</div></div>
<div style="position:absolute;left:0px;top:205px;width:15px;height:1px;background:#dcdcdc"></div>
<div style="position:absolute;left:0;top:183px;width:15px;height:22px;overflow:hidden"><div class="t ch" style="left:0;width:14px;text-align:center;top:12.7px;font-size:8.3px">5</div></div>
<div style="position:absolute;left:0px;top:227px;width:15px;height:1px;background:#dcdcdc"></div>
<div style="position:absolute;left:0;top:205px;width:15px;height:22px;overflow:hidden"><div class="t ch" style="left:0;width:14px;text-align:center;top:12.7px;font-size:8.3px">6</div></div>
<div style="position:absolute;left:0px;top:248px;width:15px;height:1px;background:#dcdcdc"></div>
<div style="position:absolute;left:0;top:227px;width:15px;height:21px;overflow:hidden"><div class="t ch" style="left:0;width:14px;text-align:center;top:11.7px;font-size:8.3px">7</div></div>
<div style="position:absolute;left:0px;top:270px;width:15px;height:1px;background:#dcdcdc"></div>
<div style="position:absolute;left:0;top:248px;width:15px;height:22px;overflow:hidden"><div class="t ch" style="left:0;width:14px;text-align:center;top:12.7px;font-size:8.3px">8</div></div>
<div style="position:absolute;left:0px;top:292px;width:15px;height:1px;background:#dcdcdc"></div>
<div style="position:absolute;left:0;top:270px;width:15px;height:22px;overflow:hidden"><div class="t ch" style="left:0;width:14px;text-align:center;top:12.7px;font-size:8.3px">9</div></div>
<div style="position:absolute;left:0px;top:314px;width:15px;height:1px;background:#dcdcdc"></div>
<div style="position:absolute;left:0;top:292px;width:15px;height:22px;overflow:hidden"><div class="t ch" style="left:0;width:14px;text-align:center;top:12.7px;font-size:8.3px">10</div></div>
<div style="position:absolute;left:0px;top:335px;width:15px;height:1px;background:#dcdcdc"></div>
<div style="position:absolute;left:0;top:314px;width:15px;height:21px;overflow:hidden"><div class="t ch" style="left:0;width:14px;text-align:center;top:11.7px;font-size:8.3px">11</div></div>
<div style="position:absolute;left:0px;top:357px;width:15px;height:1px;background:#dcdcdc"></div>
<div style="position:absolute;left:0;top:335px;width:15px;height:22px;overflow:hidden"><div class="t ch" style="left:0;width:14px;text-align:center;top:12.7px;font-size:8.3px">12</div></div>
<div style="position:absolute;left:0px;top:379px;width:15px;height:1px;background:#dcdcdc"></div>
<div style="position:absolute;left:0;top:357px;width:15px;height:22px;overflow:hidden"><div class="t ch" style="left:0;width:14px;text-align:center;top:12.7px;font-size:8.3px">13</div></div>
<div style="position:absolute;left:0px;top:400px;width:15px;height:1px;background:#dcdcdc"></div>
<div style="position:absolute;left:0;top:379px;width:15px;height:21px;overflow:hidden"><div class="t ch" style="left:0;width:14px;text-align:center;top:11.7px;font-size:8.3px">14</div></div>
<div style="position:absolute;left:0px;top:422px;width:15px;height:1px;background:#dcdcdc"></div>
<div style="position:absolute;left:0;top:400px;width:15px;height:22px;overflow:hidden"><div class="t ch" style="left:0;width:14px;text-align:center;top:12.7px;font-size:8.3px">15</div></div>
<div style="position:absolute;left:0px;top:444px;width:15px;height:1px;background:#dcdcdc"></div>
<div style="position:absolute;left:0;top:422px;width:15px;height:22px;overflow:hidden"><div class="t ch" style="left:0;width:14px;text-align:center;top:12.7px;font-size:8.3px">16</div></div>
<div style="position:absolute;left:0px;top:466px;width:15px;height:1px;background:#dcdcdc"></div>
<div style="position:absolute;left:0;top:444px;width:15px;height:22px;overflow:hidden"><div class="t ch" style="left:0;width:14px;text-align:center;top:12.7px;font-size:8.3px">17</div></div>
<div style="position:absolute;left:15px;top:115px;width:1009px;height:340px;background:#fff"></div>
<div style="position:absolute;left:113px;top:115px;width:1px;height:340px;background:#e1e1e1"></div>
<div style="position:absolute;left:119px;top:115px;width:1px;height:340px;background:#e1e1e1"></div>
<div style="position:absolute;left:200px;top:115px;width:1px;height:340px;background:#e1e1e1"></div>
<div style="position:absolute;left:277px;top:115px;width:1px;height:340px;background:#e1e1e1"></div>
<div style="position:absolute;left:319px;top:115px;width:1px;height:340px;background:#e1e1e1"></div>
<div style="position:absolute;left:371px;top:115px;width:1px;height:340px;background:#e1e1e1"></div>
<div style="position:absolute;left:394px;top:115px;width:1px;height:340px;background:#e1e1e1"></div>
<div style="position:absolute;left:434px;top:115px;width:1px;height:340px;background:#e1e1e1"></div>
<div style="position:absolute;left:490px;top:115px;width:1px;height:340px;background:#e1e1e1"></div>
<div style="position:absolute;left:546px;top:115px;width:1px;height:340px;background:#e1e1e1"></div>
<div style="position:absolute;left:602px;top:115px;width:1px;height:340px;background:#e1e1e1"></div>
<div style="position:absolute;left:632px;top:115px;width:1px;height:340px;background:#e1e1e1"></div>
<div style="position:absolute;left:673px;top:115px;width:1px;height:340px;background:#e1e1e1"></div>
<div style="position:absolute;left:703px;top:115px;width:1px;height:340px;background:#e1e1e1"></div>
<div style="position:absolute;left:744px;top:115px;width:1px;height:340px;background:#e1e1e1"></div>
<div style="position:absolute;left:807px;top:115px;width:1px;height:340px;background:#e1e1e1"></div>
<div style="position:absolute;left:864px;top:115px;width:1px;height:340px;background:#e1e1e1"></div>
<div style="position:absolute;left:919px;top:115px;width:1px;height:340px;background:#e1e1e1"></div>
<div style="position:absolute;left:1006px;top:115px;width:1px;height:340px;background:#e1e1e1"></div>
<div style="position:absolute;left:1090px;top:115px;width:1px;height:340px;background:#e1e1e1"></div>
<div style="position:absolute;left:15px;top:143px;width:1009px;height:1px;background:#e1e1e1"></div>
<div style="position:absolute;left:15px;top:148px;width:1009px;height:1px;background:#e1e1e1"></div>
<div style="position:absolute;left:15px;top:155px;width:1009px;height:1px;background:#e1e1e1"></div>
<div style="position:absolute;left:15px;top:183px;width:1009px;height:1px;background:#e1e1e1"></div>
<div style="position:absolute;left:15px;top:205px;width:1009px;height:1px;background:#e1e1e1"></div>
<div style="position:absolute;left:15px;top:227px;width:1009px;height:1px;background:#e1e1e1"></div>
<div style="position:absolute;left:15px;top:248px;width:1009px;height:1px;background:#e1e1e1"></div>
<div style="position:absolute;left:15px;top:270px;width:1009px;height:1px;background:#e1e1e1"></div>
<div style="position:absolute;left:15px;top:292px;width:1009px;height:1px;background:#e1e1e1"></div>
<div style="position:absolute;left:15px;top:314px;width:1009px;height:1px;background:#e1e1e1"></div>
<div style="position:absolute;left:15px;top:335px;width:1009px;height:1px;background:#e1e1e1"></div>
<div style="position:absolute;left:15px;top:357px;width:1009px;height:1px;background:#e1e1e1"></div>
<div style="position:absolute;left:15px;top:379px;width:1009px;height:1px;background:#e1e1e1"></div>
<div style="position:absolute;left:15px;top:400px;width:1009px;height:1px;background:#e1e1e1"></div>
<div style="position:absolute;left:15px;top:422px;width:1009px;height:1px;background:#e1e1e1"></div>
<div style="position:absolute;left:15px;top:444px;width:1009px;height:1px;background:#e1e1e1"></div>
<div style="position:absolute;left:15px;top:466px;width:1009px;height:1px;background:#e1e1e1"></div>
<div style="position:absolute;left:394px;top:183px;width:40px;height:272px;background:#d9d9d9"></div>
<div style="position:absolute;left:434px;top:183px;width:56px;height:272px;background:#d9d9d9"></div>
<div style="position:absolute;left:546px;top:183px;width:56px;height:272px;background:#d9d9d9"></div>
<div style="position:absolute;left:602px;top:183px;width:30px;height:272px;background:#d9d9d9"></div>
<div style="position:absolute;left:632px;top:183px;width:41px;height:272px;background:#f2f2f2"></div>
<div style="position:absolute;left:673px;top:183px;width:30px;height:272px;background:#d9d9d9"></div>
<div style="position:absolute;left:703px;top:183px;width:41px;height:272px;background:#f2f2f2"></div>
<div style="position:absolute;left:807px;top:183px;width:57px;height:272px;background:#d9d9d9"></div>
<div style="position:absolute;left:919px;top:183px;width:87px;height:272px;background:#d9d9d9"></div>
<div style="position:absolute;left:434px;top:183px;width:1px;height:272px;background:#f4f4f4"></div>
<div style="position:absolute;left:490px;top:183px;width:1px;height:272px;background:#f4f4f4"></div>
<div style="position:absolute;left:602px;top:183px;width:1px;height:272px;background:#f4f4f4"></div>
<div style="position:absolute;left:632px;top:183px;width:1px;height:272px;background:#f4f4f4"></div>
<div style="position:absolute;left:673px;top:183px;width:1px;height:272px;background:#f4f4f4"></div>
<div style="position:absolute;left:703px;top:183px;width:1px;height:272px;background:#f4f4f4"></div>
<div style="position:absolute;left:744px;top:183px;width:1px;height:272px;background:#f4f4f4"></div>
<div style="position:absolute;left:864px;top:183px;width:1px;height:272px;background:#f4f4f4"></div>
<div style="position:absolute;left:1006px;top:183px;width:1px;height:272px;background:#f4f4f4"></div>
<div style="position:absolute;left:394px;top:183px;width:40px;height:1px;background:#ebebeb"></div>
<div style="position:absolute;left:434px;top:183px;width:56px;height:1px;background:#ebebeb"></div>
<div style="position:absolute;left:546px;top:183px;width:56px;height:1px;background:#ebebeb"></div>
<div style="position:absolute;left:602px;top:183px;width:30px;height:1px;background:#ebebeb"></div>
<div style="position:absolute;left:632px;top:183px;width:41px;height:1px;background:#ebebeb"></div>
<div style="position:absolute;left:673px;top:183px;width:30px;height:1px;background:#ebebeb"></div>
<div style="position:absolute;left:703px;top:183px;width:41px;height:1px;background:#ebebeb"></div>
<div style="position:absolute;left:807px;top:183px;width:57px;height:1px;background:#ebebeb"></div>
<div style="position:absolute;left:919px;top:183px;width:87px;height:1px;background:#ebebeb"></div>
<div style="position:absolute;left:394px;top:205px;width:40px;height:1px;background:#ebebeb"></div>
<div style="position:absolute;left:434px;top:205px;width:56px;height:1px;background:#ebebeb"></div>
<div style="position:absolute;left:546px;top:205px;width:56px;height:1px;background:#ebebeb"></div>
<div style="position:absolute;left:602px;top:205px;width:30px;height:1px;background:#ebebeb"></div>
<div style="position:absolute;left:632px;top:205px;width:41px;height:1px;background:#ebebeb"></div>
<div style="position:absolute;left:673px;top:205px;width:30px;height:1px;background:#ebebeb"></div>
<div style="position:absolute;left:703px;top:205px;width:41px;height:1px;background:#ebebeb"></div>
<div style="position:absolute;left:807px;top:205px;width:57px;height:1px;background:#ebebeb"></div>
<div style="position:absolute;left:919px;top:205px;width:87px;height:1px;background:#ebebeb"></div>
<div style="position:absolute;left:394px;top:227px;width:40px;height:1px;background:#ebebeb"></div>
<div style="position:absolute;left:434px;top:227px;width:56px;height:1px;background:#ebebeb"></div>
<div style="position:absolute;left:546px;top:227px;width:56px;height:1px;background:#ebebeb"></div>
<div style="position:absolute;left:602px;top:227px;width:30px;height:1px;background:#ebebeb"></div>
<div style="position:absolute;left:632px;top:227px;width:41px;height:1px;background:#ebebeb"></div>
<div style="position:absolute;left:673px;top:227px;width:30px;height:1px;background:#ebebeb"></div>
<div style="position:absolute;left:703px;top:227px;width:41px;height:1px;background:#ebebeb"></div>
<div style="position:absolute;left:807px;top:227px;width:57px;height:1px;background:#ebebeb"></div>
<div style="position:absolute;left:919px;top:227px;width:87px;height:1px;background:#ebebeb"></div>
<div style="position:absolute;left:394px;top:248px;width:40px;height:1px;background:#ebebeb"></div>
<div style="position:absolute;left:434px;top:248px;width:56px;height:1px;background:#ebebeb"></div>
<div style="position:absolute;left:546px;top:248px;width:56px;height:1px;background:#ebebeb"></div>
<div style="position:absolute;left:602px;top:248px;width:30px;height:1px;background:#ebebeb"></div>
<div style="position:absolute;left:632px;top:248px;width:41px;height:1px;background:#ebebeb"></div>
<div style="position:absolute;left:673px;top:248px;width:30px;height:1px;background:#ebebeb"></div>
<div style="position:absolute;left:703px;top:248px;width:41px;height:1px;background:#ebebeb"></div>
<div style="position:absolute;left:807px;top:248px;width:57px;height:1px;background:#ebebeb"></div>
<div style="position:absolute;left:919px;top:248px;width:87px;height:1px;background:#ebebeb"></div>
<div style="position:absolute;left:394px;top:270px;width:40px;height:1px;background:#ebebeb"></div>
<div style="position:absolute;left:434px;top:270px;width:56px;height:1px;background:#ebebeb"></div>
<div style="position:absolute;left:546px;top:270px;width:56px;height:1px;background:#ebebeb"></div>
<div style="position:absolute;left:602px;top:270px;width:30px;height:1px;background:#ebebeb"></div>
<div style="position:absolute;left:632px;top:270px;width:41px;height:1px;background:#ebebeb"></div>
<div style="position:absolute;left:673px;top:270px;width:30px;height:1px;background:#ebebeb"></div>
<div style="position:absolute;left:703px;top:270px;width:41px;height:1px;background:#ebebeb"></div>
<div style="position:absolute;left:807px;top:270px;width:57px;height:1px;background:#ebebeb"></div>
<div style="position:absolute;left:919px;top:270px;width:87px;height:1px;background:#ebebeb"></div>
<div style="position:absolute;left:394px;top:292px;width:40px;height:1px;background:#ebebeb"></div>
<div style="position:absolute;left:434px;top:292px;width:56px;height:1px;background:#ebebeb"></div>
<div style="position:absolute;left:546px;top:292px;width:56px;height:1px;background:#ebebeb"></div>
<div style="position:absolute;left:602px;top:292px;width:30px;height:1px;background:#ebebeb"></div>
<div style="position:absolute;left:632px;top:292px;width:41px;height:1px;background:#ebebeb"></div>
<div style="position:absolute;left:673px;top:292px;width:30px;height:1px;background:#ebebeb"></div>
<div style="position:absolute;left:703px;top:292px;width:41px;height:1px;background:#ebebeb"></div>
<div style="position:absolute;left:807px;top:292px;width:57px;height:1px;background:#ebebeb"></div>
<div style="position:absolute;left:919px;top:292px;width:87px;height:1px;background:#ebebeb"></div>
<div style="position:absolute;left:394px;top:314px;width:40px;height:1px;background:#ebebeb"></div>
<div style="position:absolute;left:434px;top:314px;width:56px;height:1px;background:#ebebeb"></div>
<div style="position:absolute;left:546px;top:314px;width:56px;height:1px;background:#ebebeb"></div>
<div style="position:absolute;left:602px;top:314px;width:30px;height:1px;background:#ebebeb"></div>
<div style="position:absolute;left:632px;top:314px;width:41px;height:1px;background:#ebebeb"></div>
<div style="position:absolute;left:673px;top:314px;width:30px;height:1px;background:#ebebeb"></div>
<div style="position:absolute;left:703px;top:314px;width:41px;height:1px;background:#ebebeb"></div>
<div style="position:absolute;left:807px;top:314px;width:57px;height:1px;background:#ebebeb"></div>
<div style="position:absolute;left:919px;top:314px;width:87px;height:1px;background:#ebebeb"></div>
<div style="position:absolute;left:394px;top:335px;width:40px;height:1px;background:#ebebeb"></div>
<div style="position:absolute;left:434px;top:335px;width:56px;height:1px;background:#ebebeb"></div>
<div style="position:absolute;left:546px;top:335px;width:56px;height:1px;background:#ebebeb"></div>
<div style="position:absolute;left:602px;top:335px;width:30px;height:1px;background:#ebebeb"></div>
<div style="position:absolute;left:632px;top:335px;width:41px;height:1px;background:#ebebeb"></div>
<div style="position:absolute;left:673px;top:335px;width:30px;height:1px;background:#ebebeb"></div>
<div style="position:absolute;left:703px;top:335px;width:41px;height:1px;background:#ebebeb"></div>
<div style="position:absolute;left:807px;top:335px;width:57px;height:1px;background:#ebebeb"></div>
<div style="position:absolute;left:919px;top:335px;width:87px;height:1px;background:#ebebeb"></div>
<div style="position:absolute;left:394px;top:357px;width:40px;height:1px;background:#ebebeb"></div>
<div style="position:absolute;left:434px;top:357px;width:56px;height:1px;background:#ebebeb"></div>
<div style="position:absolute;left:546px;top:357px;width:56px;height:1px;background:#ebebeb"></div>
<div style="position:absolute;left:602px;top:357px;width:30px;height:1px;background:#ebebeb"></div>
<div style="position:absolute;left:632px;top:357px;width:41px;height:1px;background:#ebebeb"></div>
<div style="position:absolute;left:673px;top:357px;width:30px;height:1px;background:#ebebeb"></div>
<div style="position:absolute;left:703px;top:357px;width:41px;height:1px;background:#ebebeb"></div>
<div style="position:absolute;left:807px;top:357px;width:57px;height:1px;background:#ebebeb"></div>
<div style="position:absolute;left:919px;top:357px;width:87px;height:1px;background:#ebebeb"></div>
<div style="position:absolute;left:394px;top:379px;width:40px;height:1px;background:#ebebeb"></div>
<div style="position:absolute;left:434px;top:379px;width:56px;height:1px;background:#ebebeb"></div>
<div style="position:absolute;left:546px;top:379px;width:56px;height:1px;background:#ebebeb"></div>
<div style="position:absolute;left:602px;top:379px;width:30px;height:1px;background:#ebebeb"></div>
<div style="position:absolute;left:632px;top:379px;width:41px;height:1px;background:#ebebeb"></div>
<div style="position:absolute;left:673px;top:379px;width:30px;height:1px;background:#ebebeb"></div>
<div style="position:absolute;left:703px;top:379px;width:41px;height:1px;background:#ebebeb"></div>
<div style="position:absolute;left:807px;top:379px;width:57px;height:1px;background:#ebebeb"></div>
<div style="position:absolute;left:919px;top:379px;width:87px;height:1px;background:#ebebeb"></div>
<div style="position:absolute;left:394px;top:400px;width:40px;height:1px;background:#ebebeb"></div>
<div style="position:absolute;left:434px;top:400px;width:56px;height:1px;background:#ebebeb"></div>
<div style="position:absolute;left:546px;top:400px;width:56px;height:1px;background:#ebebeb"></div>
<div style="position:absolute;left:602px;top:400px;width:30px;height:1px;background:#ebebeb"></div>
<div style="position:absolute;left:632px;top:400px;width:41px;height:1px;background:#ebebeb"></div>
<div style="position:absolute;left:673px;top:400px;width:30px;height:1px;background:#ebebeb"></div>
<div style="position:absolute;left:703px;top:400px;width:41px;height:1px;background:#ebebeb"></div>
<div style="position:absolute;left:807px;top:400px;width:57px;height:1px;background:#ebebeb"></div>
<div style="position:absolute;left:919px;top:400px;width:87px;height:1px;background:#ebebeb"></div>
<div style="position:absolute;left:394px;top:422px;width:40px;height:1px;background:#ebebeb"></div>
<div style="position:absolute;left:434px;top:422px;width:56px;height:1px;background:#ebebeb"></div>
<div style="position:absolute;left:546px;top:422px;width:56px;height:1px;background:#ebebeb"></div>
<div style="position:absolute;left:602px;top:422px;width:30px;height:1px;background:#ebebeb"></div>
<div style="position:absolute;left:632px;top:422px;width:41px;height:1px;background:#ebebeb"></div>
<div style="position:absolute;left:673px;top:422px;width:30px;height:1px;background:#ebebeb"></div>
<div style="position:absolute;left:703px;top:422px;width:41px;height:1px;background:#ebebeb"></div>
<div style="position:absolute;left:807px;top:422px;width:57px;height:1px;background:#ebebeb"></div>
<div style="position:absolute;left:919px;top:422px;width:87px;height:1px;background:#ebebeb"></div>
<div style="position:absolute;left:394px;top:444px;width:40px;height:1px;background:#ebebeb"></div>
<div style="position:absolute;left:434px;top:444px;width:56px;height:1px;background:#ebebeb"></div>
<div style="position:absolute;left:546px;top:444px;width:56px;height:1px;background:#ebebeb"></div>
<div style="position:absolute;left:602px;top:444px;width:30px;height:1px;background:#ebebeb"></div>
<div style="position:absolute;left:632px;top:444px;width:41px;height:1px;background:#ebebeb"></div>
<div style="position:absolute;left:673px;top:444px;width:30px;height:1px;background:#ebebeb"></div>
<div style="position:absolute;left:703px;top:444px;width:41px;height:1px;background:#ebebeb"></div>
<div style="position:absolute;left:807px;top:444px;width:57px;height:1px;background:#ebebeb"></div>
<div style="position:absolute;left:919px;top:444px;width:87px;height:1px;background:#ebebeb"></div>
<div style="position:absolute;left:394px;top:466px;width:40px;height:1px;background:#ebebeb"></div>
<div style="position:absolute;left:434px;top:466px;width:56px;height:1px;background:#ebebeb"></div>
<div style="position:absolute;left:546px;top:466px;width:56px;height:1px;background:#ebebeb"></div>
<div style="position:absolute;left:602px;top:466px;width:30px;height:1px;background:#ebebeb"></div>
<div style="position:absolute;left:632px;top:466px;width:41px;height:1px;background:#ebebeb"></div>
<div style="position:absolute;left:673px;top:466px;width:30px;height:1px;background:#ebebeb"></div>
<div style="position:absolute;left:703px;top:466px;width:41px;height:1px;background:#ebebeb"></div>
<div style="position:absolute;left:807px;top:466px;width:57px;height:1px;background:#ebebeb"></div>
<div style="position:absolute;left:919px;top:466px;width:87px;height:1px;background:#ebebeb"></div>
<div style="position:absolute;left:1006.5px;top:115px;width:20px;height:340px;background:#fff"></div>
<div style="position:absolute;left:15px;top:115px;width:1009px;height:34px;background:#3a3838"></div>
<div style="position:absolute;left:15px;top:115px;width:98px;height:340px;background:#3a3838"></div>
<div style="position:absolute;left:113px;top:149px;width:893px;height:8px;background:#fff"></div>
<div style="position:absolute;left:120px;top:157px;width:79px;height:25.5px;background:#3a3838;overflow:hidden">
<div style="position:absolute;left:0;top:0;width:78px;height:26px;overflow:hidden">
<div class="t" style="left:7px;top:4.199999999999989px;font-size:7.0px;font-weight:bold;color:#fff;transform:scaleX(1.019);transform-origin:0 0;">Equipamento</div>
<div class="t" style="left:7px;top:15.099999999999994px;font-size:7.0px;font-weight:bold;color:#fff;transform:scaleX(0.986);transform-origin:0 0;">Alugado</div>
</div>
</div>
<div style="position:absolute;left:189.5px;top:172.8px;width:9.5px;height:9.5px;background:#f4f4f4;border:0.5px solid #c8c8c8"></div>
<svg style="left:192px;top:176.5px" width="5" height="3" viewBox="0 0 5 3"><path d="M0 0H5L2.5 3Z" fill="#555"/></svg>
<div style="position:absolute;left:201px;top:157px;width:74px;height:25.5px;background:#3a3838;overflow:hidden">
<div class="t" style="left:7px;top:9.400000000000006px;font-size:7.0px;font-weight:bold;color:#fff;transform:scaleX(1.010);transform-origin:0 0;">Cliente</div>
</div>
<div style="position:absolute;left:265.5px;top:172.8px;width:9.5px;height:9.5px;background:#f4f4f4;border:0.5px solid #c8c8c8"></div>
<svg style="left:268px;top:176.5px" width="5" height="3" viewBox="0 0 5 3"><path d="M0 0H5L2.5 3Z" fill="#555"/></svg>
<div style="position:absolute;left:277px;top:157px;width:41px;height:25.5px;background:#3a3838;overflow:hidden">
<div style="position:absolute;left:0;top:0;width:40px;height:26px;overflow:hidden">
<div class="t" style="left:7px;top:4.199999999999989px;font-size:7.0px;font-weight:bold;color:#fff;transform:scaleX(1.009);transform-origin:0 0;">Tipo de</div>
<div class="t" style="left:7px;top:15.099999999999994px;font-size:7.0px;font-weight:bold;color:#fff;transform:scaleX(0.956);transform-origin:0 0;">Locação</div>
</div>
</div>
<div style="position:absolute;left:308.5px;top:172.8px;width:9.5px;height:9.5px;background:#f4f4f4;border:0.5px solid #c8c8c8"></div>
<svg style="left:311px;top:176.5px" width="5" height="3" viewBox="0 0 5 3"><path d="M0 0H5L2.5 3Z" fill="#555"/></svg>
<div style="position:absolute;left:320px;top:157px;width:50px;height:25.5px;background:#3a3838;overflow:hidden">
<div style="position:absolute;left:0;top:0;width:49px;height:26px;overflow:hidden">
<div class="t" style="left:7px;top:4.199999999999989px;font-size:7.0px;font-weight:bold;color:#fff;transform:scaleX(1.034);transform-origin:0 0;">Data de</div>
<div class="t" style="left:7px;top:15.099999999999994px;font-size:7.0px;font-weight:bold;color:#fff;transform:scaleX(1.016);transform-origin:0 0;">Retirada</div>
</div>
</div>
<div style="position:absolute;left:360.5px;top:172.8px;width:9.5px;height:9.5px;background:#f4f4f4;border:0.5px solid #c8c8c8"></div>
<svg style="left:363px;top:176.5px" width="5" height="3" viewBox="0 0 5 3"><path d="M0 0H5L2.5 3Z" fill="#555"/></svg>
<div style="position:absolute;left:372px;top:157px;width:60px;height:25.5px;background:#3a3838;overflow:hidden">
<div style="position:absolute;left:0;top:0;width:59px;height:26px;overflow:hidden">
<div class="t" style="left:7px;top:4.199999999999989px;font-size:7.0px;font-weight:bold;color:#fff;transform:scaleX(0.975);transform-origin:0 0;">Dias, Semanas</div>
<div class="t" style="left:7px;top:15.099999999999994px;font-size:7.0px;font-weight:bold;color:#fff;transform:scaleX(1.015);transform-origin:0 0;">ou Meses</div>
</div>
</div>
<div style="position:absolute;left:422.5px;top:172.8px;width:9.5px;height:9.5px;background:#f4f4f4;border:0.5px solid #c8c8c8"></div>
<svg style="left:425px;top:176.5px" width="5" height="3" viewBox="0 0 5 3"><path d="M0 0H5L2.5 3Z" fill="#555"/></svg>
<div style="position:absolute;left:435px;top:157px;width:55px;height:25.5px;background:#3a3838;overflow:hidden">
<div style="position:absolute;left:0;top:0;width:54px;height:26px;overflow:hidden">
<div class="t" style="left:7px;top:4.199999999999989px;font-size:7.0px;font-weight:bold;color:#fff;transform:scaleX(1.005);transform-origin:0 0;">Data Prevista</div>
<div class="t" style="left:7px;top:15.099999999999994px;font-size:7.0px;font-weight:bold;color:#fff;transform:scaleX(1.005);transform-origin:0 0;">de Devolução</div>
</div>
</div>
<div style="position:absolute;left:480.5px;top:172.8px;width:9.5px;height:9.5px;background:#f4f4f4;border:0.5px solid #c8c8c8"></div>
<svg style="left:483px;top:176.5px" width="5" height="3" viewBox="0 0 5 3"><path d="M0 0H5L2.5 3Z" fill="#555"/></svg>
<div style="position:absolute;left:492px;top:157px;width:53px;height:25.5px;background:#3a3838;overflow:hidden">
<div style="position:absolute;left:0;top:0;width:52px;height:26px;overflow:hidden">
<div class="t" style="left:7px;top:4.199999999999989px;font-size:7.0px;font-weight:bold;color:#fff;transform:scaleX(1.011);transform-origin:0 0;">Data Real de</div>
<div class="t" style="left:7px;top:15.099999999999994px;font-size:7.0px;font-weight:bold;color:#fff;transform:scaleX(1.000);transform-origin:0 0;">Devolução</div>
</div>
</div>
<div style="position:absolute;left:535.5px;top:172.8px;width:9.5px;height:9.5px;background:#f4f4f4;border:0.5px solid #c8c8c8"></div>
<svg style="left:538px;top:176.5px" width="5" height="3" viewBox="0 0 5 3"><path d="M0 0H5L2.5 3Z" fill="#555"/></svg>
<div style="position:absolute;left:547px;top:157px;width:54.5px;height:25.5px;background:#3a3838;overflow:hidden">
<div style="position:absolute;left:0;top:0;width:53.5px;height:26px;overflow:hidden">
<div class="t" style="left:7px;top:4.199999999999989px;font-size:7.0px;font-weight:bold;color:#fff;transform:scaleX(1.040);transform-origin:0 0;">Valor</div>
<div class="t" style="left:7px;top:15.099999999999994px;font-size:7.0px;font-weight:bold;color:#fff;transform:scaleX(1.023);transform-origin:0 0;">Contratado</div>
</div>
</div>
<div style="position:absolute;left:592.0px;top:172.8px;width:9.5px;height:9.5px;background:#f4f4f4;border:0.5px solid #c8c8c8"></div>
<svg style="left:594.5px;top:176.5px" width="5" height="3" viewBox="0 0 5 3"><path d="M0 0H5L2.5 3Z" fill="#555"/></svg>
<div style="position:absolute;left:603.5px;top:157px;width:68.5px;height:25.5px;background:#3a3838;overflow:hidden">
<div class="t" style="left:7px;top:9.400000000000006px;font-size:7.0px;font-weight:bold;color:#fff;transform:scaleX(1.022);transform-origin:0 0;">Período Total</div>
</div>
<div style="position:absolute;left:662.5px;top:172.8px;width:9.5px;height:9.5px;background:#f4f4f4;border:0.5px solid #c8c8c8"></div>
<svg style="left:665px;top:176.5px" width="5" height="3" viewBox="0 0 5 3"><path d="M0 0H5L2.5 3Z" fill="#555"/></svg>
<div style="position:absolute;left:674px;top:157px;width:69px;height:25.5px;background:#3a3838;overflow:hidden">
<div class="t" style="left:7px;top:9.400000000000006px;font-size:7.0px;font-weight:bold;color:#fff;transform:scaleX(0.993);transform-origin:0 0;">Atraso</div>
</div>
<div style="position:absolute;left:733.5px;top:172.8px;width:9.5px;height:9.5px;background:#f4f4f4;border:0.5px solid #c8c8c8"></div>
<svg style="left:736px;top:176.5px" width="5" height="3" viewBox="0 0 5 3"><path d="M0 0H5L2.5 3Z" fill="#555"/></svg>
<div style="position:absolute;left:745px;top:157px;width:61px;height:25.5px;background:#3a3838;overflow:hidden">
<div style="position:absolute;left:0;top:0;width:60px;height:26px;overflow:hidden">
<div class="t" style="left:7px;top:4.199999999999989px;font-size:7.0px;font-weight:bold;color:#fff;transform:scaleX(1.003);transform-origin:0 0;">Adicionais/</div>
<div class="t" style="left:7px;top:15.099999999999994px;font-size:7.0px;font-weight:bold;color:#fff;transform:scaleX(0.979);transform-origin:0 0;">Descontos</div>
</div>
</div>
<div style="position:absolute;left:796.5px;top:172.8px;width:9.5px;height:9.5px;background:#f4f4f4;border:0.5px solid #c8c8c8"></div>
<svg style="left:799px;top:176.5px" width="5" height="3" viewBox="0 0 5 3"><path d="M0 0H5L2.5 3Z" fill="#555"/></svg>
<div style="position:absolute;left:808px;top:157px;width:55px;height:25.5px;background:#3a3838;overflow:hidden">
<div class="t" style="left:7px;top:9.400000000000006px;font-size:7.0px;font-weight:bold;color:#fff;transform:scaleX(1.041);transform-origin:0 0;">Valor Total</div>
</div>
<div style="position:absolute;left:853.5px;top:172.8px;width:9.5px;height:9.5px;background:#f4f4f4;border:0.5px solid #c8c8c8"></div>
<svg style="left:856px;top:176.5px" width="5" height="3" viewBox="0 0 5 3"><path d="M0 0H5L2.5 3Z" fill="#555"/></svg>
<div style="position:absolute;left:864px;top:157px;width:54px;height:25.5px;background:#3a3838;overflow:hidden">
<div style="position:absolute;left:0;top:0;width:53px;height:26px;overflow:hidden">
<div class="t" style="left:7px;top:4.199999999999989px;font-size:7.0px;font-weight:bold;color:#fff;transform:scaleX(0.987);transform-origin:0 0;">Status do</div>
<div class="t" style="left:7px;top:15.099999999999994px;font-size:7.0px;font-weight:bold;color:#fff;transform:scaleX(1.016);transform-origin:0 0;">Pagamento</div>
</div>
</div>
<div style="position:absolute;left:908.5px;top:172.8px;width:9.5px;height:9.5px;background:#f4f4f4;border:0.5px solid #c8c8c8"></div>
<svg style="left:911px;top:176.5px" width="5" height="3" viewBox="0 0 5 3"><path d="M0 0H5L2.5 3Z" fill="#555"/></svg>
<div style="position:absolute;left:920px;top:157px;width:85px;height:25.5px;background:#3a3838;overflow:hidden">
<div class="t" style="left:7px;top:9.400000000000006px;font-size:7.0px;font-weight:bold;color:#fff;transform:scaleX(0.990);transform-origin:0 0;">Status do Aluguel</div>
</div>
<div style="position:absolute;left:995.5px;top:172.8px;width:9.5px;height:9.5px;background:#f4f4f4;border:0.5px solid #c8c8c8"></div>
<svg style="left:998px;top:176.5px" width="5" height="3" viewBox="0 0 5 3"><path d="M0 0H5L2.5 3Z" fill="#555"/></svg>
<div style="position:absolute;left:864px;top:183px;width:55px;height:22px;background:#375623"></div>
<div style="position:absolute;left:919px;top:183px;width:87px;height:22px;background:#375623"></div>
<div style="position:absolute;left:919px;top:183px;width:1px;height:22px;background:#f0f0f0"></div>
<div style="position:absolute;left:864px;top:205px;width:142px;height:1px;background:#e8ece6"></div>
<div class="t" style="left:127.6px;top:191.3px;font-size:7.4px;color:#262626;transform:scaleX(1.001);transform-origin:0 0;-webkit-text-stroke:0.1px #262626;">Betoneira 35kg</div>
<div class="t" style="left:208.4px;top:191.3px;font-size:7.4px;color:#262626;transform:scaleX(1.012);transform-origin:0 0;-webkit-text-stroke:0.1px #262626;">Construtora 01</div>
<div class="t" style="left:284.4px;top:191.3px;font-size:7.4px;color:#262626;transform:scaleX(1.018);transform-origin:0 0;-webkit-text-stroke:0.1px #262626;">Diário</div>
<div class="t" style="left:326.8px;top:191.3px;font-size:7.4px;color:#262626;transform:scaleX(1.056);transform-origin:0 0;-webkit-text-stroke:0.1px #262626;">03/07/2023</div>
<div class="t" style="left:282.5px;top:191.3px;width:200px;text-align:center;font-size:7.4px;color:#262626;transform:scaleX(0.998);transform-origin:50% 0;-webkit-text-stroke:0.1px #262626;">12</div>
<div class="t" style="left:401px;top:191.3px;font-size:7.4px;color:#262626;transform:scaleX(0.969);transform-origin:0 0;-webkit-text-stroke:0.1px #262626;">dias</div>
<div class="t" style="left:442px;top:191.3px;font-size:7.4px;color:#262626;transform:scaleX(1.056);transform-origin:0 0;-webkit-text-stroke:0.1px #262626;">15/07/2023</div>
<div class="t" style="left:499.2px;top:191.3px;font-size:7.4px;color:#262626;transform:scaleX(1.056);transform-origin:0 0;-webkit-text-stroke:0.1px #262626;">13/07/2023</div>
<div class="t" style="left:553px;top:191.3px;font-size:7.4px;color:#262626;transform:scaleX(0.955);transform-origin:0 0;-webkit-text-stroke:0.1px #262626;">R$600</div>
<div class="t" style="left:610px;top:191.3px;font-size:7.4px;color:#262626;transform:scaleX(0.996);transform-origin:0 0;-webkit-text-stroke:0.1px #262626;">12,0</div>
<div class="t" style="left:640.5px;top:191.3px;font-size:7.4px;color:#262626;transform:scaleX(0.969);transform-origin:0 0;-webkit-text-stroke:0.1px #262626;">dias</div>
<div class="t" style="left:680.6px;top:191.3px;font-size:7.4px;color:#262626;transform:scaleX(0.995);transform-origin:0 0;-webkit-text-stroke:0.1px #262626;">0,0</div>
<div class="t" style="left:710.6px;top:191.3px;font-size:7.4px;color:#262626;transform:scaleX(0.969);transform-origin:0 0;-webkit-text-stroke:0.1px #262626;">dias</div>
<div class="t" style="left:814.6px;top:191.3px;font-size:7.4px;color:#262626;transform:scaleX(0.949);transform-origin:0 0;-webkit-text-stroke:0.1px #262626;">R$ 600</div>
<div class="t" style="left:871.6px;top:191.3px;font-size:7.4px;color:#fff;transform:scaleX(0.935);transform-origin:0 0;-webkit-text-stroke:0.1px #fff;">Pago</div>
<div class="t" style="left:926.6px;top:191.3px;font-size:7.4px;color:#fff;transform:scaleX(0.979);transform-origin:0 0;-webkit-text-stroke:0.1px #fff;">Finalizado</div>
<svg style="left:490.5px;top:183.5px" width="3.5" height="3.5" viewBox="0 0 4 4"><path d="M0 0H4L0 4Z" fill="#1f8a3a"/></svg>
<div style="position:absolute;left:864px;top:205px;width:55px;height:22px;background:#c00000"></div>
<div style="position:absolute;left:919px;top:205px;width:87px;height:22px;background:#bf8f00"></div>
<div style="position:absolute;left:919px;top:205px;width:1px;height:22px;background:#f0f0f0"></div>
<div style="position:absolute;left:864px;top:227px;width:142px;height:1px;background:#e8ece6"></div>
<div style="position:absolute;left:673px;top:205px;width:30px;height:22px;background:#c00000"></div>
<div class="t" style="left:127.6px;top:213.3px;font-size:7.4px;color:#262626;transform:scaleX(1.008);transform-origin:0 0;-webkit-text-stroke:0.1px #262626;">Carretinha</div>
<div class="t" style="left:208.4px;top:213.3px;font-size:7.4px;color:#262626;transform:scaleX(1.012);transform-origin:0 0;-webkit-text-stroke:0.1px #262626;">Construtora 02</div>
<div class="t" style="left:284.4px;top:213.3px;font-size:7.4px;color:#262626;transform:scaleX(0.962);transform-origin:0 0;-webkit-text-stroke:0.1px #262626;">Semanal</div>
<div class="t" style="left:326.8px;top:213.3px;font-size:7.4px;color:#262626;transform:scaleX(1.056);transform-origin:0 0;-webkit-text-stroke:0.1px #262626;">04/07/2023</div>
<div class="t" style="left:282.5px;top:213.3px;width:200px;text-align:center;font-size:7.4px;color:#262626;transform:scaleX(0.998);transform-origin:50% 0;-webkit-text-stroke:0.1px #262626;">1</div>
<div class="t" style="left:401px;top:213.3px;font-size:7.4px;color:#262626;transform:scaleX(0.976);transform-origin:0 0;-webkit-text-stroke:0.1px #262626;">semana</div>
<div class="t" style="left:442px;top:213.3px;font-size:7.4px;color:#262626;transform:scaleX(1.072);transform-origin:0 0;-webkit-text-stroke:0.1px #262626;">11/07/2023</div>
<div class="t" style="left:499.2px;top:213.3px;font-size:7.4px;color:#262626;transform:scaleX(1.056);transform-origin:0 0;-webkit-text-stroke:0.1px #262626;">14/07/2023</div>
<div class="t" style="left:553px;top:213.3px;font-size:7.4px;color:#262626;transform:scaleX(0.955);transform-origin:0 0;-webkit-text-stroke:0.1px #262626;">R$200</div>
<div class="t" style="left:610px;top:213.3px;font-size:7.4px;color:#262626;transform:scaleX(0.995);transform-origin:0 0;-webkit-text-stroke:0.1px #262626;">1,4</div>
<div class="t" style="left:640.5px;top:213.3px;font-size:7.4px;color:#262626;transform:scaleX(0.976);transform-origin:0 0;-webkit-text-stroke:0.1px #262626;">semana</div>
<div class="t" style="left:680.6px;top:213.3px;font-size:7.4px;color:#fff;transform:scaleX(0.995);transform-origin:0 0;-webkit-text-stroke:0.1px #fff;">0,4</div>
<div class="t" style="left:710.6px;top:213.3px;font-size:7.4px;color:#262626;transform:scaleX(0.976);transform-origin:0 0;-webkit-text-stroke:0.1px #262626;">semana</div>
<div class="t" style="left:814.6px;top:213.3px;font-size:7.4px;color:#262626;transform:scaleX(0.949);transform-origin:0 0;-webkit-text-stroke:0.1px #262626;">R$ 200</div>
<div class="t" style="left:871.6px;top:213.3px;font-size:7.4px;color:#fff;transform:scaleX(1.002);transform-origin:0 0;-webkit-text-stroke:0.1px #fff;">Pendente</div>
<div class="t" style="left:926.6px;top:213.3px;font-size:7.4px;color:#fff;transform:scaleX(0.989);transform-origin:0 0;-webkit-text-stroke:0.1px #fff;">Finalizado com atraso</div>
<svg style="left:319.5px;top:205.5px" width="3.5" height="3.5" viewBox="0 0 4 4"><path d="M0 0H4L0 4Z" fill="#1f8a3a"/></svg>
<svg style="left:490.5px;top:205.5px" width="3.5" height="3.5" viewBox="0 0 4 4"><path d="M0 0H4L0 4Z" fill="#1f8a3a"/></svg>
<div style="position:absolute;left:864px;top:227px;width:55px;height:21px;background:#375623"></div>
<div style="position:absolute;left:919px;top:227px;width:87px;height:21px;background:#375623"></div>
<div style="position:absolute;left:919px;top:227px;width:1px;height:21px;background:#f0f0f0"></div>
<div style="position:absolute;left:864px;top:248px;width:142px;height:1px;background:#e8ece6"></div>
<div class="t" style="left:127.6px;top:234.8px;font-size:7.4px;color:#262626;transform:scaleX(0.995);transform-origin:0 0;-webkit-text-stroke:0.1px #262626;">Furadeira</div>
<div class="t" style="left:208.4px;top:234.8px;font-size:7.4px;color:#262626;transform:scaleX(1.012);transform-origin:0 0;-webkit-text-stroke:0.1px #262626;">Construtora 03</div>
<div class="t" style="left:284.4px;top:234.8px;font-size:7.4px;color:#262626;transform:scaleX(1.011);transform-origin:0 0;-webkit-text-stroke:0.1px #262626;">Mensal</div>
<div class="t" style="left:326.8px;top:234.8px;font-size:7.4px;color:#262626;transform:scaleX(1.056);transform-origin:0 0;-webkit-text-stroke:0.1px #262626;">05/07/2023</div>
<div class="t" style="left:282.5px;top:234.8px;width:200px;text-align:center;font-size:7.4px;color:#262626;transform:scaleX(0.998);transform-origin:50% 0;-webkit-text-stroke:0.1px #262626;">2</div>
<div class="t" style="left:401px;top:234.8px;font-size:7.4px;color:#262626;transform:scaleX(0.958);transform-origin:0 0;-webkit-text-stroke:0.1px #262626;">meses</div>
<div class="t" style="left:442px;top:234.8px;font-size:7.4px;color:#262626;transform:scaleX(1.056);transform-origin:0 0;-webkit-text-stroke:0.1px #262626;">05/09/2023</div>
<div class="t" style="left:499.2px;top:234.8px;font-size:7.4px;color:#262626;transform:scaleX(1.056);transform-origin:0 0;-webkit-text-stroke:0.1px #262626;">15/07/2023</div>
<div class="t" style="left:553px;top:234.8px;font-size:7.4px;color:#262626;transform:scaleX(0.964);transform-origin:0 0;-webkit-text-stroke:0.1px #262626;">R$1.500</div>
<div class="t" style="left:610px;top:234.8px;font-size:7.4px;color:#262626;transform:scaleX(0.995);transform-origin:0 0;-webkit-text-stroke:0.1px #262626;">2,0</div>
<div class="t" style="left:640.5px;top:234.8px;font-size:7.4px;color:#262626;transform:scaleX(0.958);transform-origin:0 0;-webkit-text-stroke:0.1px #262626;">meses</div>
<div class="t" style="left:680.6px;top:234.8px;font-size:7.4px;color:#262626;transform:scaleX(0.995);transform-origin:0 0;-webkit-text-stroke:0.1px #262626;">0,0</div>
<div class="t" style="left:710.6px;top:234.8px;font-size:7.4px;color:#262626;transform:scaleX(0.958);transform-origin:0 0;-webkit-text-stroke:0.1px #262626;">meses</div>
<div class="t" style="left:751.6px;top:234.8px;font-size:7.4px;color:#262626;transform:scaleX(0.959);transform-origin:0 0;-webkit-text-stroke:0.1px #262626;">R$ 50,00</div>
<div class="t" style="left:814.6px;top:234.8px;font-size:7.4px;color:#262626;transform:scaleX(0.959);transform-origin:0 0;-webkit-text-stroke:0.1px #262626;">R$ 1.550</div>
<div class="t" style="left:871.6px;top:234.8px;font-size:7.4px;color:#fff;transform:scaleX(0.935);transform-origin:0 0;-webkit-text-stroke:0.1px #fff;">Pago</div>
<div class="t" style="left:926.6px;top:234.8px;font-size:7.4px;color:#fff;transform:scaleX(0.979);transform-origin:0 0;-webkit-text-stroke:0.1px #fff;">Finalizado</div>
<svg style="left:319.5px;top:227.5px" width="3.5" height="3.5" viewBox="0 0 4 4"><path d="M0 0H4L0 4Z" fill="#1f8a3a"/></svg>
<svg style="left:490.5px;top:227.5px" width="3.5" height="3.5" viewBox="0 0 4 4"><path d="M0 0H4L0 4Z" fill="#1f8a3a"/></svg>
<div style="position:absolute;left:864px;top:248px;width:55px;height:22px;background:#c00000"></div>
<div style="position:absolute;left:919px;top:248px;width:87px;height:22px;background:#375623"></div>
<div style="position:absolute;left:919px;top:248px;width:1px;height:22px;background:#f0f0f0"></div>
<div style="position:absolute;left:864px;top:270px;width:142px;height:1px;background:#e8ece6"></div>
<div class="t" style="left:127.6px;top:256.3px;font-size:7.4px;color:#262626;transform:scaleX(0.932);transform-origin:0 0;-webkit-text-stroke:0.1px #262626;">Facão</div>
<div class="t" style="left:208.4px;top:256.3px;font-size:7.4px;color:#262626;transform:scaleX(1.012);transform-origin:0 0;-webkit-text-stroke:0.1px #262626;">Construtora 04</div>
<div class="t" style="left:284.4px;top:256.3px;font-size:7.4px;color:#262626;transform:scaleX(0.962);transform-origin:0 0;-webkit-text-stroke:0.1px #262626;">Semanal</div>
<div class="t" style="left:326.8px;top:256.3px;font-size:7.4px;color:#262626;transform:scaleX(1.056);transform-origin:0 0;-webkit-text-stroke:0.1px #262626;">06/07/2023</div>
<div class="t" style="left:282.5px;top:256.3px;width:200px;text-align:center;font-size:7.4px;color:#262626;transform:scaleX(0.998);transform-origin:50% 0;-webkit-text-stroke:0.1px #262626;">2</div>
<div class="t" style="left:401px;top:256.3px;font-size:7.4px;color:#262626;transform:scaleX(0.961);transform-origin:0 0;-webkit-text-stroke:0.1px #262626;">semanas</div>
<div class="t" style="left:442px;top:256.3px;font-size:7.4px;color:#262626;transform:scaleX(1.056);transform-origin:0 0;-webkit-text-stroke:0.1px #262626;">20/07/2023</div>
<div class="t" style="left:499.2px;top:256.3px;font-size:7.4px;color:#262626;transform:scaleX(1.056);transform-origin:0 0;-webkit-text-stroke:0.1px #262626;">16/07/2023</div>
<div class="t" style="left:553px;top:256.3px;font-size:7.4px;color:#262626;transform:scaleX(0.955);transform-origin:0 0;-webkit-text-stroke:0.1px #262626;">R$400</div>
<div class="t" style="left:610px;top:256.3px;font-size:7.4px;color:#262626;transform:scaleX(0.995);transform-origin:0 0;-webkit-text-stroke:0.1px #262626;">2,0</div>
<div class="t" style="left:640.5px;top:256.3px;font-size:7.4px;color:#262626;transform:scaleX(0.961);transform-origin:0 0;-webkit-text-stroke:0.1px #262626;">semanas</div>
<div class="t" style="left:680.6px;top:256.3px;font-size:7.4px;color:#262626;transform:scaleX(0.995);transform-origin:0 0;-webkit-text-stroke:0.1px #262626;">0,0</div>
<div class="t" style="left:710.6px;top:256.3px;font-size:7.4px;color:#262626;transform:scaleX(0.961);transform-origin:0 0;-webkit-text-stroke:0.1px #262626;">semanas</div>
<div class="t" style="left:814.6px;top:256.3px;font-size:7.4px;color:#262626;transform:scaleX(0.949);transform-origin:0 0;-webkit-text-stroke:0.1px #262626;">R$ 400</div>
<div class="t" style="left:871.6px;top:256.3px;font-size:7.4px;color:#fff;transform:scaleX(1.002);transform-origin:0 0;-webkit-text-stroke:0.1px #fff;">Pendente</div>
<div class="t" style="left:926.6px;top:256.3px;font-size:7.4px;color:#fff;transform:scaleX(0.979);transform-origin:0 0;-webkit-text-stroke:0.1px #fff;">Finalizado</div>
<svg style="left:319.5px;top:248.5px" width="3.5" height="3.5" viewBox="0 0 4 4"><path d="M0 0H4L0 4Z" fill="#1f8a3a"/></svg>
<svg style="left:490.5px;top:248.5px" width="3.5" height="3.5" viewBox="0 0 4 4"><path d="M0 0H4L0 4Z" fill="#1f8a3a"/></svg>
<div style="position:absolute;left:864px;top:270px;width:55px;height:22px;background:#375623"></div>
<div style="position:absolute;left:919px;top:270px;width:87px;height:22px;background:#375623"></div>
<div style="position:absolute;left:919px;top:270px;width:1px;height:22px;background:#f0f0f0"></div>
<div style="position:absolute;left:864px;top:292px;width:142px;height:1px;background:#e8ece6"></div>
<div class="t" style="left:127.6px;top:278.3px;font-size:7.4px;color:#262626;transform:scaleX(0.996);transform-origin:0 0;-webkit-text-stroke:0.1px #262626;">Esmerilhadeira</div>
<div class="t" style="left:208.4px;top:278.3px;font-size:7.4px;color:#262626;transform:scaleX(1.012);transform-origin:0 0;-webkit-text-stroke:0.1px #262626;">Construtora 05</div>
<div class="t" style="left:284.4px;top:278.3px;font-size:7.4px;color:#262626;transform:scaleX(1.011);transform-origin:0 0;-webkit-text-stroke:0.1px #262626;">Mensal</div>
<div class="t" style="left:326.8px;top:278.3px;font-size:7.4px;color:#262626;transform:scaleX(1.056);transform-origin:0 0;-webkit-text-stroke:0.1px #262626;">07/07/2023</div>
<div class="t" style="left:282.5px;top:278.3px;width:200px;text-align:center;font-size:7.4px;color:#262626;transform:scaleX(0.998);transform-origin:50% 0;-webkit-text-stroke:0.1px #262626;">1</div>
<div class="t" style="left:401px;top:278.3px;font-size:7.4px;color:#262626;transform:scaleX(0.978);transform-origin:0 0;-webkit-text-stroke:0.1px #262626;">mês</div>
<div class="t" style="left:442px;top:278.3px;font-size:7.4px;color:#262626;transform:scaleX(1.056);transform-origin:0 0;-webkit-text-stroke:0.1px #262626;">07/08/2023</div>
<div class="t" style="left:499.2px;top:278.3px;font-size:7.4px;color:#262626;transform:scaleX(1.056);transform-origin:0 0;-webkit-text-stroke:0.1px #262626;">17/07/2023</div>
<div class="t" style="left:553px;top:278.3px;font-size:7.4px;color:#262626;transform:scaleX(0.955);transform-origin:0 0;-webkit-text-stroke:0.1px #262626;">R$750</div>
<div class="t" style="left:610px;top:278.3px;font-size:7.4px;color:#262626;transform:scaleX(0.995);transform-origin:0 0;-webkit-text-stroke:0.1px #262626;">1,0</div>
<div class="t" style="left:640.5px;top:278.3px;font-size:7.4px;color:#262626;transform:scaleX(0.978);transform-origin:0 0;-webkit-text-stroke:0.1px #262626;">mês</div>
<div class="t" style="left:680.6px;top:278.3px;font-size:7.4px;color:#262626;transform:scaleX(0.995);transform-origin:0 0;-webkit-text-stroke:0.1px #262626;">0,0</div>
<div class="t" style="left:710.6px;top:278.3px;font-size:7.4px;color:#262626;transform:scaleX(0.978);transform-origin:0 0;-webkit-text-stroke:0.1px #262626;">mês</div>
<div class="t" style="left:814.6px;top:278.3px;font-size:7.4px;color:#262626;transform:scaleX(0.949);transform-origin:0 0;-webkit-text-stroke:0.1px #262626;">R$ 750</div>
<div class="t" style="left:871.6px;top:278.3px;font-size:7.4px;color:#fff;transform:scaleX(0.935);transform-origin:0 0;-webkit-text-stroke:0.1px #fff;">Pago</div>
<div class="t" style="left:926.6px;top:278.3px;font-size:7.4px;color:#fff;transform:scaleX(0.979);transform-origin:0 0;-webkit-text-stroke:0.1px #fff;">Finalizado</div>
<svg style="left:319.5px;top:270.5px" width="3.5" height="3.5" viewBox="0 0 4 4"><path d="M0 0H4L0 4Z" fill="#1f8a3a"/></svg>
<svg style="left:490.5px;top:270.5px" width="3.5" height="3.5" viewBox="0 0 4 4"><path d="M0 0H4L0 4Z" fill="#1f8a3a"/></svg>
<svg style="left:150.6px;top:120px" width="40" height="20" viewBox="0 0 40 20"><ellipse cx="20" cy="10" rx="19.3" ry="9" fill="#ffc000"/></svg>
<div class="t mo" style="left:70.6px;top:126.5px;width:200px;text-align:center;color:#262626">JAN</div>
<svg style="left:185.6px;top:120px" width="40" height="20" viewBox="0 0 40 20"><ellipse cx="20" cy="10" rx="18.8" ry="8.6" fill="none" stroke="#c8c8c8" stroke-width="0.9"/></svg>
<div class="t mo" style="left:105.6px;top:126.5px;width:200px;text-align:center;">FEV</div>
<svg style="left:220.6px;top:120px" width="40" height="20" viewBox="0 0 40 20"><ellipse cx="20" cy="10" rx="18.8" ry="8.6" fill="none" stroke="#c8c8c8" stroke-width="0.9"/></svg>
<div class="t mo" style="left:140.6px;top:126.5px;width:200px;text-align:center;">MAR</div>
<svg style="left:255.60000000000002px;top:120px" width="40" height="20" viewBox="0 0 40 20"><ellipse cx="20" cy="10" rx="18.8" ry="8.6" fill="none" stroke="#c8c8c8" stroke-width="0.9"/></svg>
<div class="t mo" style="left:175.60000000000002px;top:126.5px;width:200px;text-align:center;">ABR</div>
<svg style="left:290.6px;top:120px" width="40" height="20" viewBox="0 0 40 20"><ellipse cx="20" cy="10" rx="18.8" ry="8.6" fill="none" stroke="#c8c8c8" stroke-width="0.9"/></svg>
<div class="t mo" style="left:210.60000000000002px;top:126.5px;width:200px;text-align:center;">MAI</div>
<svg style="left:325.6px;top:120px" width="40" height="20" viewBox="0 0 40 20"><ellipse cx="20" cy="10" rx="18.8" ry="8.6" fill="none" stroke="#c8c8c8" stroke-width="0.9"/></svg>
<div class="t mo" style="left:245.60000000000002px;top:126.5px;width:200px;text-align:center;">JUN</div>
<svg style="left:360.6px;top:120px" width="40" height="20" viewBox="0 0 40 20"><ellipse cx="20" cy="10" rx="18.8" ry="8.6" fill="none" stroke="#c8c8c8" stroke-width="0.9"/></svg>
<div class="t mo" style="left:280.6px;top:126.5px;width:200px;text-align:center;">JUL</div>
<svg style="left:395.6px;top:120px" width="40" height="20" viewBox="0 0 40 20"><ellipse cx="20" cy="10" rx="18.8" ry="8.6" fill="none" stroke="#c8c8c8" stroke-width="0.9"/></svg>
<div class="t mo" style="left:315.6px;top:126.5px;width:200px;text-align:center;">AGO</div>
<svg style="left:430.6px;top:120px" width="40" height="20" viewBox="0 0 40 20"><ellipse cx="20" cy="10" rx="18.8" ry="8.6" fill="none" stroke="#c8c8c8" stroke-width="0.9"/></svg>
<div class="t mo" style="left:350.6px;top:126.5px;width:200px;text-align:center;">SET</div>
<svg style="left:465.6px;top:120px" width="40" height="20" viewBox="0 0 40 20"><ellipse cx="20" cy="10" rx="18.8" ry="8.6" fill="none" stroke="#c8c8c8" stroke-width="0.9"/></svg>
<div class="t mo" style="left:385.6px;top:126.5px;width:200px;text-align:center;">OUT</div>
<svg style="left:500.6px;top:120px" width="40" height="20" viewBox="0 0 40 20"><ellipse cx="20" cy="10" rx="18.8" ry="8.6" fill="none" stroke="#c8c8c8" stroke-width="0.9"/></svg>
<div class="t mo" style="left:420.6px;top:126.5px;width:200px;text-align:center;">NOV</div>
<svg style="left:535.6px;top:120px" width="40" height="20" viewBox="0 0 40 20"><ellipse cx="20" cy="10" rx="18.8" ry="8.6" fill="none" stroke="#c8c8c8" stroke-width="0.9"/></svg>
<div class="t mo" style="left:455.6px;top:126.5px;width:200px;text-align:center;">DEZ</div>
<div style="position:absolute;left:15px;top:224.8px;width:101px;height:28.2px;background:#ffc000"></div>
<div class="t" style="left:19.8px;top:200.2px;font-size:6.6px;font-weight:bold;color:#fff;transform:scaleX(0.949);transform-origin:0 0;">CADASTROS</div>
<div class="t" style="left:19.8px;top:236.7px;font-size:6.6px;font-weight:bold;color:#3a2c14;transform:scaleX(0.975);transform-origin:0 0;">CONTROLE DE ALUGUÉIS</div>
<div class="t" style="left:19.8px;top:270.5px;font-size:6.6px;font-weight:bold;color:#fff;transform:scaleX(0.962);transform-origin:0 0;">RELATÓRIOS</div>
<div class="t" style="left:19.8px;top:299.5px;font-size:6.6px;font-weight:bold;color:#fff;transform:scaleX(0.960);transform-origin:0 0;">ANÁLISE DE</div>
<div class="t" style="left:19.8px;top:309.5px;font-size:6.6px;font-weight:bold;color:#fff;transform:scaleX(1.029);transform-origin:0 0;">EQUIPAMENTOS</div>
<div class="t" style="left:19.8px;top:340.5px;font-size:6.6px;font-weight:bold;color:#fff;transform:scaleX(0.982);transform-origin:0 0;">DASHBOARD</div>
<div class="t" style="left:19.8px;top:372.5px;font-size:6.6px;font-weight:bold;color:#fff;transform:scaleX(0.965);transform-origin:0 0;">INSTRUÇÕES</div>
<svg style="left:14px;top:114px" width="60" height="60" viewBox="0 0 60 60">
<g stroke="#231f20" stroke-width="1.5" stroke-linejoin="round">
<path d="M5.5 11V28H29V11L17 3Z" fill="#e6e6ea"/>
<path d="M2 13L17 2L32 13L30 16.2L17 6.5L4 16.2Z" fill="#e57f72"/>
<rect x="12.5" y="18.5" width="9.5" height="9" fill="#aab5c2"/>
<circle cx="17" cy="12.5" r="2" fill="#8fc5b6"/>
<circle cx="37.5" cy="16.5" r="2" fill="#e99a9a" stroke-width="1"/>
<circle cx="44.2" cy="16.5" r="2" fill="#e99a9a" stroke-width="1"/>
<circle cx="51" cy="16.5" r="2" fill="#e99a9a" stroke-width="1"/>
<circle cx="42" cy="38" r="13.5" fill="#f2d26b"/>
<circle cx="42" cy="38" r="10.3" fill="#5cc6ec"/>
<path d="M41.5 28.5V31M41.5 45V47.5M32 38H34.5M48.5 38H51M35 31.5L36.5 33M46.5 43L48 44.5M48 31.5L46.5 33M36.5 43L35 44.5" fill="none" stroke-width="1.1"/>
<path d="M37 34L41.5 38H46.5" fill="none" stroke-width="1.3"/>
<circle cx="41.5" cy="38" r="1.4" fill="#e57f72" stroke-width="0.9"/>
<path d="M9.5 27.8H30.5V55.5H3.5V33.8Z" fill="#f6d7b9"/>
<path d="M9.5 27.8V33.8H3.5Z" fill="#a9d18e"/>
<rect x="14.5" y="31.3" width="13.5" height="3.2" fill="#f2d26b" stroke-width="1.1"/>
<path d="M6.2 38.2H7M9.8 38.2H20M6.2 41.7H20M6.2 45.2H8.3M11.3 45.2H20M6.2 48.8H20M6.2 52.4H20" fill="none" stroke-width="1.8"/>
</g>
<path d="M28.3 45.3Q27.5 43.6 25.3 43.6Q22.2 43.6 22.2 46.2Q22.2 48.3 25.3 48.8Q28.6 49.3 28.6 51.8Q28.6 54.4 25.3 54.4Q22.6 54.4 21.9 52.5M25.3 41.8V43.6M25.3 54.4V56.2" fill="none" stroke="#231f20" stroke-width="1.5"/>
</svg>
<div style="position:absolute;left:200px;top:104px;width:1px;height:351px;background:#bdbdbd"></div>
<div style="position:absolute;left:15px;top:183px;width:1009px;height:0.8px;background:#bdbdbd"></div>
<div style="position:absolute;left:0px;top:455px;width:1024px;height:6px;background:#f0f0f0"></div>
<div style="position:absolute;left:0px;top:455px;width:1024px;height:1px;background:#e3e3e3"></div>
<div style="position:absolute;left:0px;top:456px;width:159px;height:5px;background:#f4f4f4;border-right:1px solid #dcdcdc"></div>
<div style="position:absolute;left:184px;top:456px;width:900px;height:5px;background:#f4f4f4;border-left:1px solid #dcdcdc"></div>
<div style="position:absolute;left:165.5px;top:458px;width:1.5px;height:3px;background:#333"></div>
<div style="position:absolute;left:105px;top:458px;width:1px;height:3px;background:#cfcfcf"></div>
<div style="position:absolute;left:131px;top:458px;width:1px;height:3px;background:#cfcfcf"></div>
<div style="position:absolute;left:211px;top:458px;width:1px;height:3px;background:#cfcfcf"></div>
<div style="position:absolute;left:246px;top:458px;width:1px;height:3px;background:#cfcfcf"></div>
<div style="position:absolute;left:286px;top:458px;width:1px;height:3px;background:#cfcfcf"></div>
<div style="position:absolute;left:336px;top:458px;width:1px;height:3px;background:#cfcfcf"></div>
<div style="position:absolute;left:391px;top:458px;width:1px;height:3px;background:#cfcfcf"></div>
<div style="position:absolute;left:446px;top:458px;width:1px;height:3px;background:#cfcfcf"></div>
<div style="position:absolute;left:496px;top:458px;width:1px;height:3px;background:#cfcfcf"></div>
<div style="position:absolute;left:546px;top:458px;width:1px;height:3px;background:#cfcfcf"></div>
<div style="position:absolute;left:601px;top:458px;width:1px;height:3px;background:#cfcfcf"></div>
<div style="position:absolute;left:646px;top:458px;width:1px;height:3px;background:#cfcfcf"></div>
<div style="position:absolute;left:691px;top:458px;width:1px;height:3px;background:#cfcfcf"></div>
<div style="position:absolute;left:736px;top:458px;width:1px;height:3px;background:#cfcfcf"></div>
</body></html>
